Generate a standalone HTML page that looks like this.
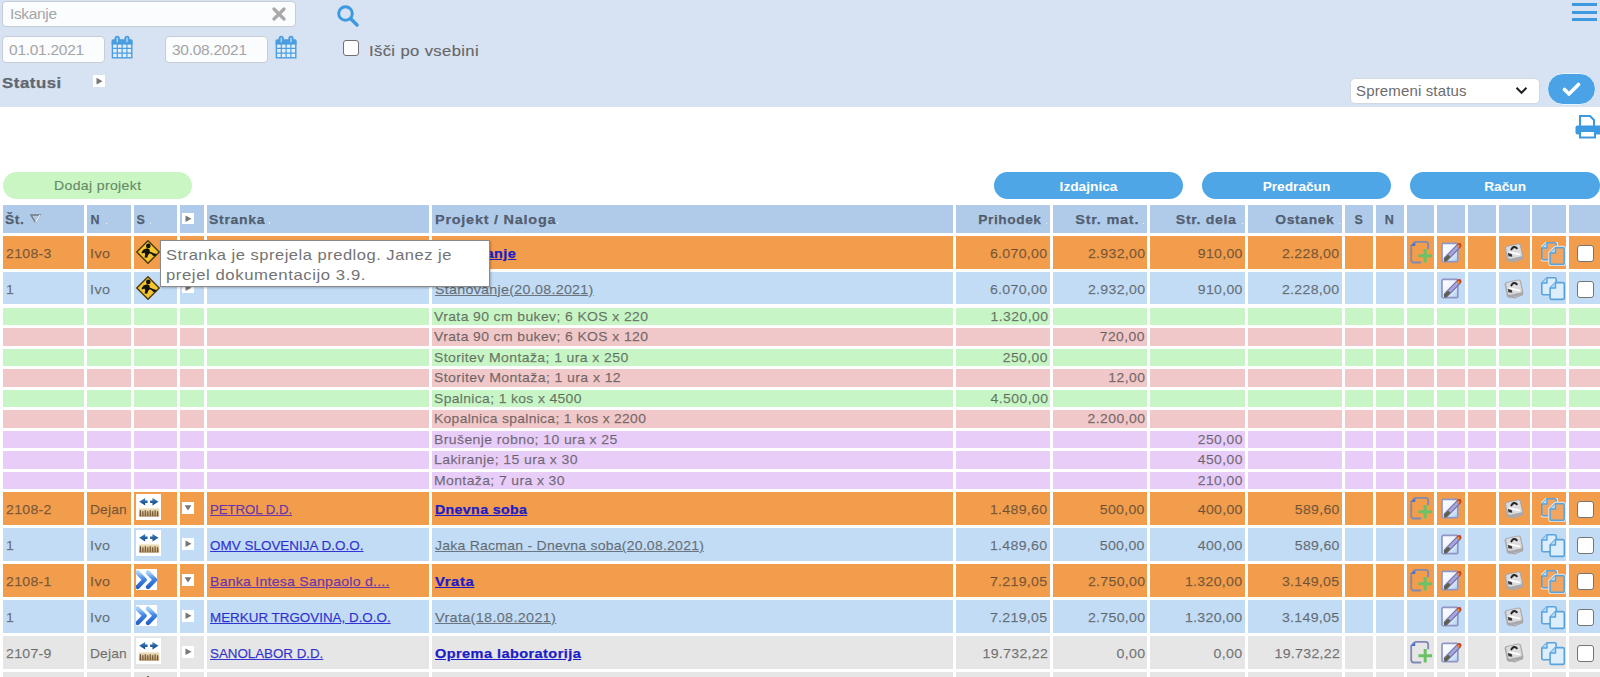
<!DOCTYPE html>
<html><head><meta charset="utf-8"><title>Projekti</title>
<style>
html,body{margin:0;padding:0;background:#fff;width:1600px;height:677px;overflow:hidden;position:relative;font-family:"Liberation Sans",sans-serif;}
.b{position:absolute;display:block;}
.t{position:absolute;white-space:nowrap;font-family:"Liberation Sans",sans-serif;}
.v{-webkit-text-stroke:0.25px currentColor;}
</style></head><body>
<div class="b" style="left:0.00px;top:0.00px;width:1600.00px;height:107.00px;background:#d7e3f2;"></div>
<div class="b" style="left:1.60px;top:0.60px;width:294.80px;height:26.30px;background:#fbfcfd;border:1px solid #c6cdd6;border-radius:4px;box-sizing:border-box;"></div>
<div class="t " style="top:6.08px;font-size:15.5px;line-height:15.5px;color:#a5a5a5;font-weight:normal;letter-spacing:-0.352px;left:10.00px;">Iskanje</div>
<svg class="b" style="left:272.00px;top:7.00px;" width="14" height="14" viewBox="0 0 14 14"><path d="M2 2 L12 12 M12 2 L2 12" stroke="#a9a9a9" stroke-width="3.2" stroke-linecap="round"/></svg>
<svg class="b" style="left:336.00px;top:4.00px;" width="24" height="23" viewBox="0 0 24 23"><circle cx="9.5" cy="9.5" r="6.8" fill="none" stroke="#3d9ae0" stroke-width="3"/><path d="M14.5 14.5 L21 21" stroke="#3d9ae0" stroke-width="3.4" stroke-linecap="round"/></svg>
<div class="b" style="left:1.60px;top:36.20px;width:103.80px;height:27.20px;background:#fbfcfd;border:1px solid #c6cdd6;border-radius:4px;box-sizing:border-box;"></div>
<div class="t " style="top:41.88px;font-size:15.5px;line-height:15.5px;color:#a5a5a5;font-weight:normal;letter-spacing:-0.286px;left:9.10px;">01.01.2021</div>
<div class="b" style="left:164.60px;top:36.20px;width:103.80px;height:27.20px;background:#fbfcfd;border:1px solid #c6cdd6;border-radius:4px;box-sizing:border-box;"></div>
<div class="t " style="top:41.88px;font-size:15.5px;line-height:15.5px;color:#a5a5a5;font-weight:normal;letter-spacing:-0.286px;left:172.00px;">30.08.2021</div>
<svg class="b" style="left:111.40px;top:34.60px;" width="22" height="24" viewBox="0 0 22 24"><rect x="1.4" y="8.6" width="19.4" height="14.2" fill="#e2eef9" stroke="#4a9de0" stroke-width="1.4"/><path d="M6.3 8.6 V22.8 M11.1 8.6 V22.8 M15.9 8.6 V22.8 M1.4 13.4 H20.8 M1.4 18.1 H20.8" stroke="#4a9de0" stroke-width="1.2"/><path d="M0.5 9.4 V5.8 Q0.5 4.2 2.1 4.2 H20.1 Q21.7 4.2 21.7 5.8 V9.4 Z" fill="#4a9de0"/><rect x="3.6" y="0.8" width="5.2" height="7" rx="2.6" fill="#4a9de0"/><rect x="13.4" y="0.8" width="5.2" height="7" rx="2.6" fill="#4a9de0"/><rect x="5.7" y="2.6" width="1" height="4.6" fill="#e2eef9"/><rect x="15.5" y="2.6" width="1" height="4.6" fill="#e2eef9"/></svg>
<svg class="b" style="left:274.60px;top:34.60px;" width="22" height="24" viewBox="0 0 22 24"><rect x="1.4" y="8.6" width="19.4" height="14.2" fill="#e2eef9" stroke="#4a9de0" stroke-width="1.4"/><path d="M6.3 8.6 V22.8 M11.1 8.6 V22.8 M15.9 8.6 V22.8 M1.4 13.4 H20.8 M1.4 18.1 H20.8" stroke="#4a9de0" stroke-width="1.2"/><path d="M0.5 9.4 V5.8 Q0.5 4.2 2.1 4.2 H20.1 Q21.7 4.2 21.7 5.8 V9.4 Z" fill="#4a9de0"/><rect x="3.6" y="0.8" width="5.2" height="7" rx="2.6" fill="#4a9de0"/><rect x="13.4" y="0.8" width="5.2" height="7" rx="2.6" fill="#4a9de0"/><rect x="5.7" y="2.6" width="1" height="4.6" fill="#e2eef9"/><rect x="15.5" y="2.6" width="1" height="4.6" fill="#e2eef9"/></svg>
<div class="b" style="left:342.50px;top:40.30px;width:16.20px;height:15.50px;background:#fff;border:1.5px solid #707070;border-radius:3px;box-sizing:border-box;"></div>
<div class="t " style="top:42.88px;font-size:15.5px;line-height:15.5px;color:#666;font-weight:normal;letter-spacing:0.341px;left:369.00px;transform:scaleX(1.0736);transform-origin:0 50%;-webkit-text-stroke:0.15px currentColor;">Išči po vsebini</div>
<div class="t v" style="top:74.68px;font-size:15.5px;line-height:15.5px;color:#5f6670;font-weight:bold;letter-spacing:0.488px;left:2.00px;transform:scaleX(1.0850);transform-origin:0 50%;">Statusi</div>
<div class="b" style="left:93.00px;top:75.00px;width:12.00px;height:12.40px;background:#fff;"></div>
<svg class="b" style="left:93.00px;top:75.00px;" width="12" height="12.4" viewBox="0 0 12 12.4"><path d="M3.5 2.8 L9.5 6.2 L3.5 9.6 Z" fill="#777"/></svg>
<div class="b" style="left:1572.00px;top:2.90px;width:24.70px;height:3.30px;background:#3d9ae0;"></div>
<div class="b" style="left:1572.00px;top:10.60px;width:24.70px;height:3.30px;background:#3d9ae0;"></div>
<div class="b" style="left:1572.00px;top:17.90px;width:24.70px;height:3.30px;background:#3d9ae0;"></div>
<div class="b" style="left:1349.75px;top:78.00px;width:189.75px;height:26.00px;background:#fff;border:1px solid #d2d8df;border-radius:5px;box-sizing:border-box;"></div>
<div class="t " style="top:82.80px;font-size:15px;line-height:15px;color:#6c6c6c;font-weight:normal;letter-spacing:0.15px;left:1356.00px;">Spremeni status</div>
<svg class="b" style="left:1515.00px;top:86.00px;" width="13" height="9" viewBox="0 0 13 9"><path d="M1.5 1.8 L6.5 6.8 L11.5 1.8" fill="none" stroke="#222" stroke-width="2"/></svg>
<div class="b" style="left:1547.00px;top:72.80px;width:49.00px;height:32.50px;background:#4aa3e6;border:1.5px solid #e8f3fc;border-radius:17px;box-sizing:border-box;"></div>
<svg class="b" style="left:1562.00px;top:82.00px;" width="19" height="15" viewBox="0 0 19 15"><path d="M2.5 7.5 L7 12 L16.5 2.5" fill="none" stroke="#fff" stroke-width="3.6" stroke-linecap="round" stroke-linejoin="round"/></svg>
<svg class="b" style="left:1574.00px;top:114.00px;" width="26" height="25" viewBox="0 0 26 25"><path d="M6 12 V2 H16 L20 6 V12" fill="#fff" stroke="#3d9ae0" stroke-width="2"/><rect x="1.5" y="11.5" width="26" height="9" rx="2" fill="#3d9ae0"/><rect x="6" y="17" width="15" height="6.5" fill="#fff" stroke="#3d9ae0" stroke-width="2"/></svg>
<div class="b" style="left:3.00px;top:172.00px;width:189.00px;height:27.40px;background:#c9f6c3;border-radius:14px;"></div>
<div class="t " style="top:179.36px;font-size:13.4px;line-height:13.4px;color:#688a67;font-weight:normal;letter-spacing:0.331px;left:53.90px;transform:scaleX(1.0503);transform-origin:0 50%;-webkit-text-stroke:0.15px currentColor;">Dodaj projekt</div>
<div class="b" style="left:994.00px;top:172.00px;width:189.00px;height:27.40px;background:#4ea6e6;border-radius:14px;"></div>
<div class="t" style="left:994px;width:189px;top:179.90px;font-size:13.7px;line-height:13.7px;color:#fff;font-weight:bold;text-align:center;">Izdajnica</div>
<div class="b" style="left:1202.00px;top:172.00px;width:189.00px;height:27.40px;background:#4ea6e6;border-radius:14px;"></div>
<div class="t" style="left:1202px;width:189px;top:179.90px;font-size:13.7px;line-height:13.7px;color:#fff;font-weight:bold;text-align:center;">Predračun</div>
<div class="b" style="left:1410.30px;top:172.00px;width:189.70px;height:27.40px;background:#4ea6e6;border-radius:14px;"></div>
<div class="t" style="left:1410.3px;width:189.70000000000005px;top:179.90px;font-size:13.7px;line-height:13.7px;color:#fff;font-weight:bold;text-align:center;">Račun</div>
<div class="b" style="left:3.00px;top:205.30px;width:81.00px;height:27.40px;background:#b0cbea;"></div>
<div class="b" style="left:87.00px;top:205.30px;width:43.50px;height:27.40px;background:#b0cbea;"></div>
<div class="b" style="left:133.50px;top:205.30px;width:43.20px;height:27.40px;background:#b0cbea;"></div>
<div class="b" style="left:179.70px;top:205.30px;width:24.00px;height:27.40px;background:#b0cbea;"></div>
<div class="b" style="left:206.60px;top:205.30px;width:222.60px;height:27.40px;background:#b0cbea;"></div>
<div class="b" style="left:432.00px;top:205.30px;width:520.50px;height:27.40px;background:#b0cbea;"></div>
<div class="b" style="left:955.50px;top:205.30px;width:94.50px;height:27.40px;background:#b0cbea;"></div>
<div class="b" style="left:1053.00px;top:205.30px;width:94.20px;height:27.40px;background:#b0cbea;"></div>
<div class="b" style="left:1150.00px;top:205.30px;width:94.50px;height:27.40px;background:#b0cbea;"></div>
<div class="b" style="left:1247.50px;top:205.30px;width:94.50px;height:27.40px;background:#b0cbea;"></div>
<div class="b" style="left:1345.00px;top:205.30px;width:28.00px;height:27.40px;background:#b0cbea;"></div>
<div class="b" style="left:1376.00px;top:205.30px;width:27.50px;height:27.40px;background:#b0cbea;"></div>
<div class="b" style="left:1406.50px;top:205.30px;width:27.80px;height:27.40px;background:#b0cbea;"></div>
<div class="b" style="left:1437.30px;top:205.30px;width:27.70px;height:27.40px;background:#b0cbea;"></div>
<div class="b" style="left:1468.00px;top:205.30px;width:28.00px;height:27.40px;background:#b0cbea;"></div>
<div class="b" style="left:1499.00px;top:205.30px;width:30.50px;height:27.40px;background:#b0cbea;"></div>
<div class="b" style="left:1532.20px;top:205.30px;width:34.30px;height:27.40px;background:#b0cbea;"></div>
<div class="b" style="left:1569.30px;top:205.30px;width:70.70px;height:27.40px;background:#b0cbea;"></div>
<div class="t v" style="top:214.42px;font-size:12.5px;line-height:12.5px;color:rgba(40,45,55,0.68);font-weight:bold;letter-spacing:0.565px;left:5.20px;transform:scaleX(1.1062);transform-origin:0 50%;">Št.</div>
<svg class="b" style="left:30.00px;top:214.00px;" width="11" height="9" viewBox="0 0 11 9"><path d="M1 1 H10 L5.5 8.5 Z" fill="none" stroke="#6f7a86" stroke-width="1.4"/><path d="M10 1 L5.5 8.5" stroke="#fff" stroke-width="1.2"/></svg>
<div class="t v" style="top:214.42px;font-size:12.5px;line-height:12.5px;color:rgba(40,45,55,0.68);font-weight:bold;letter-spacing:0px;left:90.50px;">N</div>
<div class="t v" style="top:214.42px;font-size:12.5px;line-height:12.5px;color:rgba(40,45,55,0.68);font-weight:bold;letter-spacing:0px;left:136.50px;">S</div>
<div class="b" style="left:182.00px;top:212.50px;width:12.00px;height:11.50px;background:#fff;"></div>
<svg class="b" style="left:182.00px;top:212.50px;" width="12" height="11.5" viewBox="0 0 12 11.5"><path d="M3.5 2.5 L9.5 5.8 L3.5 9.1 Z" fill="#777"/></svg>
<div class="t v" style="top:214.42px;font-size:12.5px;line-height:12.5px;color:rgba(40,45,55,0.68);font-weight:bold;letter-spacing:0.623px;left:209.30px;transform:scaleX(1.1222);transform-origin:0 50%;">Stranka</div>
<div class="t v" style="top:214.42px;font-size:12.5px;line-height:12.5px;color:rgba(40,45,55,0.68);font-weight:bold;letter-spacing:0.654px;left:435.00px;transform:scaleX(1.1558);transform-origin:0 50%;">Projekt / Naloga</div>
<div class="t v" style="top:214.42px;font-size:12.5px;line-height:12.5px;color:rgba(40,45,55,0.68);font-weight:bold;letter-spacing:0.509px;right:558.59px;text-align:right;transform:scaleX(1.1000);transform-origin:100% 50%;">Prihodek</div>
<div class="t v" style="top:214.42px;font-size:12.5px;line-height:12.5px;color:rgba(40,45,55,0.68);font-weight:bold;letter-spacing:0.649px;right:460.85px;text-align:right;transform:scaleX(1.1579);transform-origin:100% 50%;">Str. mat.</div>
<div class="t v" style="top:214.42px;font-size:12.5px;line-height:12.5px;color:rgba(40,45,55,0.68);font-weight:bold;letter-spacing:0.543px;right:363.96px;text-align:right;transform:scaleX(1.1341);transform-origin:100% 50%;">Str. dela</div>
<div class="t v" style="top:214.42px;font-size:12.5px;line-height:12.5px;color:rgba(40,45,55,0.68);font-weight:bold;letter-spacing:0.585px;right:265.92px;text-align:right;transform:scaleX(1.1067);transform-origin:100% 50%;">Ostanek</div>
<div class="t v" style="top:214.42px;font-size:12.5px;line-height:12.5px;color:rgba(40,45,55,0.68);font-weight:bold;letter-spacing:0px;left:1354.50px;">S</div>
<div class="t v" style="top:214.42px;font-size:12.5px;line-height:12.5px;color:rgba(40,45,55,0.68);font-weight:bold;letter-spacing:0px;left:1384.70px;">N</div>
<div class="b" style="left:105.50px;top:222.60px;width:1.30px;height:1.30px;background:rgba(255,255,255,0.8);"></div>
<div class="b" style="left:149.50px;top:222.60px;width:1.30px;height:1.30px;background:rgba(255,255,255,0.8);"></div>
<div class="b" style="left:269.00px;top:222.30px;width:1.30px;height:1.30px;background:rgba(255,255,255,0.8);"></div>
<div class="b" style="left:557.00px;top:222.30px;width:1.30px;height:1.30px;background:rgba(255,255,255,0.8);"></div>
<div class="b" style="left:1045.50px;top:222.60px;width:1.30px;height:1.30px;background:rgba(255,255,255,0.8);"></div>
<div class="b" style="left:1143.20px;top:222.60px;width:1.30px;height:1.30px;background:rgba(255,255,255,0.8);"></div>
<div class="b" style="left:1241.50px;top:222.60px;width:1.30px;height:1.30px;background:rgba(255,255,255,0.8);"></div>
<div class="b" style="left:1338.70px;top:222.60px;width:1.30px;height:1.30px;background:rgba(255,255,255,0.8);"></div>
<div class="b" style="left:3.00px;top:236.00px;width:81.00px;height:32.60px;background:#f29d4c;"></div>
<div class="b" style="left:87.00px;top:236.00px;width:43.50px;height:32.60px;background:#f29d4c;"></div>
<div class="b" style="left:133.50px;top:236.00px;width:43.20px;height:32.60px;background:#f29d4c;"></div>
<div class="b" style="left:179.70px;top:236.00px;width:24.00px;height:32.60px;background:#f29d4c;"></div>
<div class="b" style="left:206.60px;top:236.00px;width:222.60px;height:32.60px;background:#f29d4c;"></div>
<div class="b" style="left:432.00px;top:236.00px;width:520.50px;height:32.60px;background:#f29d4c;"></div>
<div class="b" style="left:955.50px;top:236.00px;width:94.50px;height:32.60px;background:#f29d4c;"></div>
<div class="b" style="left:1053.00px;top:236.00px;width:94.20px;height:32.60px;background:#f29d4c;"></div>
<div class="b" style="left:1150.00px;top:236.00px;width:94.50px;height:32.60px;background:#f29d4c;"></div>
<div class="b" style="left:1247.50px;top:236.00px;width:94.50px;height:32.60px;background:#f29d4c;"></div>
<div class="b" style="left:1345.00px;top:236.00px;width:28.00px;height:32.60px;background:#f29d4c;"></div>
<div class="b" style="left:1376.00px;top:236.00px;width:27.50px;height:32.60px;background:#f29d4c;"></div>
<div class="b" style="left:1406.50px;top:236.00px;width:27.80px;height:32.60px;background:#f29d4c;"></div>
<div class="b" style="left:1437.30px;top:236.00px;width:27.70px;height:32.60px;background:#f29d4c;"></div>
<div class="b" style="left:1468.00px;top:236.00px;width:28.00px;height:32.60px;background:#f29d4c;"></div>
<div class="b" style="left:1499.00px;top:236.00px;width:30.50px;height:32.60px;background:#f29d4c;"></div>
<div class="b" style="left:1532.20px;top:236.00px;width:34.30px;height:32.60px;background:#f29d4c;"></div>
<div class="b" style="left:1569.30px;top:236.00px;width:70.70px;height:32.60px;background:#f29d4c;"></div>
<div class="t v" style="top:246.66px;font-size:13.4px;line-height:13.4px;color:rgba(45,45,45,0.58);font-weight:normal;letter-spacing:0.293px;left:5.90px;transform:scaleX(1.0527);transform-origin:0 50%;">2108-3</div>
<div class="t v" style="top:246.66px;font-size:13.4px;line-height:13.4px;color:rgba(45,45,45,0.58);font-weight:normal;letter-spacing:0.405px;left:90.10px;transform:scaleX(1.0680);transform-origin:0 50%;">Ivo</div>
<svg class="b" style="left:136.00px;top:239.70px;" width="24" height="24" viewBox="0 0 24 24"><path d="M12 0.8 L23.2 12 L12 23.2 L0.8 12 Z" fill="#f5c72c" stroke="#4d3b12" stroke-width="1.5" stroke-linejoin="round"/><circle cx="12.3" cy="5.9" r="2.3" fill="#111"/><path d="M11.2 8.2 L7.6 9.4 L5.4 12.2 L6.4 13.6 L8.4 12.6 L9.2 14.4 L8.6 17.4 L11.2 17.8 L12 15.2 L13.8 12.8 L13.6 9.6 Z" fill="#111"/><path d="M10.6 11.6 L15.2 13 L18.2 14.6" fill="none" stroke="#111" stroke-width="1.8" stroke-linecap="round"/><ellipse cx="18.4" cy="14.8" rx="2" ry="1.4" fill="#1a1a1a"/></svg>
<div class="b" style="left:181.70px;top:246.00px;width:12.00px;height:11.50px;background:#fff;"></div>
<svg class="b" style="left:181.70px;top:246.00px;" width="12" height="11.5" viewBox="0 0 12 11.5"><path d="M2.6 3.3 L9.4 3.3 L6 8.6 Z" fill="#777"/></svg>
<div class="t v" style="top:246.66px;font-size:13.4px;line-height:13.4px;color:#1c1cc8;font-weight:bold;letter-spacing:0.405px;left:435.00px;transform:scaleX(1.0764);transform-origin:0 50%;text-decoration:underline;">Stanovanje</div>
<div class="t v" style="top:246.66px;font-size:13.4px;line-height:13.4px;color:rgba(45,45,45,0.58);font-weight:normal;letter-spacing:0.283px;right:552.32px;text-align:right;transform:scaleX(1.0570);transform-origin:100% 50%;">6.070,00</div>
<div class="t v" style="top:246.66px;font-size:13.4px;line-height:13.4px;color:rgba(45,45,45,0.58);font-weight:normal;letter-spacing:0.283px;right:455.12px;text-align:right;transform:scaleX(1.0570);transform-origin:100% 50%;">2.932,00</div>
<div class="t v" style="top:246.66px;font-size:13.4px;line-height:13.4px;color:rgba(45,45,45,0.58);font-weight:normal;letter-spacing:0.285px;right:357.81px;text-align:right;transform:scaleX(1.0521);transform-origin:100% 50%;">910,00</div>
<div class="t v" style="top:246.66px;font-size:13.4px;line-height:13.4px;color:rgba(45,45,45,0.58);font-weight:normal;letter-spacing:0.283px;right:260.32px;text-align:right;transform:scaleX(1.0570);transform-origin:100% 50%;">2.228,00</div>
<svg class="b" style="left:1408.50px;top:240.50px;" width="24" height="24" viewBox="0 0 24 24"><path d="M6 0.9 H16.6 Q19.2 0.9 19.2 3.5 V8.2" fill="none" stroke="#8088b4" stroke-width="1.8"/><path d="M6 0.9 L2.2 4.9 V18.8 Q2.2 21.5 4.8 21.5 H12.2" fill="none" stroke="#8088b4" stroke-width="1.8"/><path d="M6.2 0.9 L2.2 5 H6.2 Z" fill="#3f6fd0"/><path d="M16.2 7.9 V21.6 M9.4 14.7 H23.1" stroke="#6cc066" stroke-width="3"/></svg>
<svg class="b" style="left:1439.80px;top:241.00px;" width="22" height="22" viewBox="0 0 22 22"><defs><linearGradient id="eg" x1="0" y1="0" x2="1" y2="1"><stop offset="0" stop-color="#ffffff"/><stop offset="0.55" stop-color="#eef2ff"/><stop offset="1" stop-color="#a9cdf2"/></linearGradient></defs><rect x="2" y="2.4" width="15.8" height="18.2" rx="1.2" fill="url(#eg)" stroke="#8f96c6" stroke-width="1.7"/><path d="M6.2 17.8 L18.2 5.4" stroke="#6f70a8" stroke-width="5" stroke-linecap="round"/><path d="M6.2 17.8 L18.2 5.4" stroke="#a9a6dc" stroke-width="2.8" stroke-linecap="round"/><path d="M5.4 18.8 L8.4 15.6" stroke="#5a6040" stroke-width="3" stroke-linecap="round"/><circle cx="19.2" cy="4.4" r="2.3" fill="#c8461e"/><circle cx="18.4" cy="5.2" r="1.1" fill="#f0a040"/></svg>
<svg class="b" style="left:1503.00px;top:240.80px;" width="23" height="23" viewBox="0 0 23 23"><g transform="rotate(-12 11 11.5)"><rect x="2.6" y="3.6" width="16.8" height="16" rx="2.6" fill="#a9a9ac"/><rect x="4.2" y="4.6" width="14" height="12.2" rx="1.6" fill="#dcdcde"/></g><path d="M8.4 8.4 Q10.4 4.4 13.8 7.2" fill="none" stroke="#262626" stroke-width="2.1" stroke-linecap="round"/><path d="M5 12 L8.6 12.8 L9.4 15.8 L5.4 15.2 Z" fill="#363636"/><path d="M6.2 11.2 L17 13.6" stroke="#ffffff" stroke-width="1.8"/><path d="M3.6 18.6 L11.6 20.8 L20 17.6" fill="none" stroke="#a8a8aa" stroke-width="1.1"/></svg>
<svg class="b" style="left:1540.50px;top:241.50px;" width="25" height="24" viewBox="0 0 25 24"><path d="M6 0.8 H13.7 Q15.2 0.8 15.2 2.3 V16.2 Q15.2 17.7 13.7 17.7 H2.3 Q0.8 17.7 0.8 16.2 V6 Z" fill="none" stroke="#fbe8d8" stroke-width="3.6" stroke-linejoin="round"/><path d="M6 0.8 H13.7 Q15.2 0.8 15.2 2.3 V16.2 Q15.2 17.7 13.7 17.7 H2.3 Q0.8 17.7 0.8 16.2 V6 Z" fill="#f2a462" stroke="#5aa2dc" stroke-width="1.6" stroke-linejoin="round"/><path d="M6 0.8 V6 H0.8" fill="#b4defa" stroke="#5aa2dc" stroke-width="1.4" stroke-linejoin="round"/><path d="M14.5 5.6 H21.8 Q23.3 5.6 23.3 7.1 V20.9 Q23.3 22.4 21.8 22.4 H10.6 Q9.1 22.4 9.1 20.9 V11 Z" fill="none" stroke="#fbe8d8" stroke-width="3.6" stroke-linejoin="round"/><path d="M14.5 5.6 H21.8 Q23.3 5.6 23.3 7.1 V20.9 Q23.3 22.4 21.8 22.4 H10.6 Q9.1 22.4 9.1 20.9 V11 Z" fill="#f2a462" stroke="#5aa2dc" stroke-width="1.6" stroke-linejoin="round"/><path d="M14.5 5.6 V11 H9.1" fill="#b4defa" stroke="#5aa2dc" stroke-width="1.4" stroke-linejoin="round"/></svg>
<div class="b" style="left:1577.00px;top:244.70px;width:16.80px;height:17.00px;background:#fff;border:1.6px solid #747474;border-radius:3px;box-sizing:border-box;"></div>
<div class="b" style="left:3.00px;top:271.90px;width:81.00px;height:32.60px;background:#c3dcf5;"></div>
<div class="b" style="left:87.00px;top:271.90px;width:43.50px;height:32.60px;background:#c3dcf5;"></div>
<div class="b" style="left:133.50px;top:271.90px;width:43.20px;height:32.60px;background:#c3dcf5;"></div>
<div class="b" style="left:179.70px;top:271.90px;width:24.00px;height:32.60px;background:#c3dcf5;"></div>
<div class="b" style="left:206.60px;top:271.90px;width:222.60px;height:32.60px;background:#c3dcf5;"></div>
<div class="b" style="left:432.00px;top:271.90px;width:520.50px;height:32.60px;background:#c3dcf5;"></div>
<div class="b" style="left:955.50px;top:271.90px;width:94.50px;height:32.60px;background:#c3dcf5;"></div>
<div class="b" style="left:1053.00px;top:271.90px;width:94.20px;height:32.60px;background:#c3dcf5;"></div>
<div class="b" style="left:1150.00px;top:271.90px;width:94.50px;height:32.60px;background:#c3dcf5;"></div>
<div class="b" style="left:1247.50px;top:271.90px;width:94.50px;height:32.60px;background:#c3dcf5;"></div>
<div class="b" style="left:1345.00px;top:271.90px;width:28.00px;height:32.60px;background:#c3dcf5;"></div>
<div class="b" style="left:1376.00px;top:271.90px;width:27.50px;height:32.60px;background:#c3dcf5;"></div>
<div class="b" style="left:1406.50px;top:271.90px;width:27.80px;height:32.60px;background:#c3dcf5;"></div>
<div class="b" style="left:1437.30px;top:271.90px;width:27.70px;height:32.60px;background:#c3dcf5;"></div>
<div class="b" style="left:1468.00px;top:271.90px;width:28.00px;height:32.60px;background:#c3dcf5;"></div>
<div class="b" style="left:1499.00px;top:271.90px;width:30.50px;height:32.60px;background:#c3dcf5;"></div>
<div class="b" style="left:1532.20px;top:271.90px;width:34.30px;height:32.60px;background:#c3dcf5;"></div>
<div class="b" style="left:1569.30px;top:271.90px;width:70.70px;height:32.60px;background:#c3dcf5;"></div>
<div class="t v" style="top:282.56px;font-size:13.4px;line-height:13.4px;color:rgba(45,45,45,0.58);font-weight:normal;letter-spacing:0.217px;left:5.90px;transform:scaleX(1.0436);transform-origin:0 50%;">1</div>
<div class="t v" style="top:282.56px;font-size:13.4px;line-height:13.4px;color:rgba(45,45,45,0.58);font-weight:normal;letter-spacing:0.405px;left:90.10px;transform:scaleX(1.0680);transform-origin:0 50%;">Ivo</div>
<svg class="b" style="left:136.00px;top:275.60px;" width="24" height="24" viewBox="0 0 24 24"><path d="M12 0.8 L23.2 12 L12 23.2 L0.8 12 Z" fill="#f5c72c" stroke="#4d3b12" stroke-width="1.5" stroke-linejoin="round"/><circle cx="12.3" cy="5.9" r="2.3" fill="#111"/><path d="M11.2 8.2 L7.6 9.4 L5.4 12.2 L6.4 13.6 L8.4 12.6 L9.2 14.4 L8.6 17.4 L11.2 17.8 L12 15.2 L13.8 12.8 L13.6 9.6 Z" fill="#111"/><path d="M10.6 11.6 L15.2 13 L18.2 14.6" fill="none" stroke="#111" stroke-width="1.8" stroke-linecap="round"/><ellipse cx="18.4" cy="14.8" rx="2" ry="1.4" fill="#1a1a1a"/></svg>
<div class="b" style="left:181.70px;top:281.90px;width:12.00px;height:11.50px;background:#fff;"></div>
<svg class="b" style="left:181.70px;top:281.90px;" width="12" height="11.5" viewBox="0 0 12 11.5"><path d="M3.5 2.5 L9.5 5.8 L3.5 9.1 Z" fill="#777"/></svg>
<div class="t v" style="top:282.56px;font-size:13.4px;line-height:13.4px;color:rgba(45,45,45,0.58);font-weight:normal;letter-spacing:0.285px;left:435.00px;transform:scaleX(1.0627);transform-origin:0 50%;text-decoration:underline;">Stanovanje(20.08.2021)</div>
<div class="t v" style="top:282.56px;font-size:13.4px;line-height:13.4px;color:rgba(45,45,45,0.58);font-weight:normal;letter-spacing:0.283px;right:552.32px;text-align:right;transform:scaleX(1.0570);transform-origin:100% 50%;">6.070,00</div>
<div class="t v" style="top:282.56px;font-size:13.4px;line-height:13.4px;color:rgba(45,45,45,0.58);font-weight:normal;letter-spacing:0.283px;right:455.12px;text-align:right;transform:scaleX(1.0570);transform-origin:100% 50%;">2.932,00</div>
<div class="t v" style="top:282.56px;font-size:13.4px;line-height:13.4px;color:rgba(45,45,45,0.58);font-weight:normal;letter-spacing:0.285px;right:357.81px;text-align:right;transform:scaleX(1.0521);transform-origin:100% 50%;">910,00</div>
<div class="t v" style="top:282.56px;font-size:13.4px;line-height:13.4px;color:rgba(45,45,45,0.58);font-weight:normal;letter-spacing:0.283px;right:260.32px;text-align:right;transform:scaleX(1.0570);transform-origin:100% 50%;">2.228,00</div>
<svg class="b" style="left:1439.80px;top:276.90px;" width="22" height="22" viewBox="0 0 22 22"><defs><linearGradient id="eg" x1="0" y1="0" x2="1" y2="1"><stop offset="0" stop-color="#ffffff"/><stop offset="0.55" stop-color="#eef2ff"/><stop offset="1" stop-color="#a9cdf2"/></linearGradient></defs><rect x="2" y="2.4" width="15.8" height="18.2" rx="1.2" fill="url(#eg)" stroke="#8f96c6" stroke-width="1.7"/><path d="M6.2 17.8 L18.2 5.4" stroke="#6f70a8" stroke-width="5" stroke-linecap="round"/><path d="M6.2 17.8 L18.2 5.4" stroke="#a9a6dc" stroke-width="2.8" stroke-linecap="round"/><path d="M5.4 18.8 L8.4 15.6" stroke="#5a6040" stroke-width="3" stroke-linecap="round"/><circle cx="19.2" cy="4.4" r="2.3" fill="#c8461e"/><circle cx="18.4" cy="5.2" r="1.1" fill="#f0a040"/></svg>
<svg class="b" style="left:1503.00px;top:276.70px;" width="23" height="23" viewBox="0 0 23 23"><g transform="rotate(-12 11 11.5)"><rect x="2.6" y="3.6" width="16.8" height="16" rx="2.6" fill="#a9a9ac"/><rect x="4.2" y="4.6" width="14" height="12.2" rx="1.6" fill="#dcdcde"/></g><path d="M8.4 8.4 Q10.4 4.4 13.8 7.2" fill="none" stroke="#262626" stroke-width="2.1" stroke-linecap="round"/><path d="M5 12 L8.6 12.8 L9.4 15.8 L5.4 15.2 Z" fill="#363636"/><path d="M6.2 11.2 L17 13.6" stroke="#ffffff" stroke-width="1.8"/><path d="M3.6 18.6 L11.6 20.8 L20 17.6" fill="none" stroke="#a8a8aa" stroke-width="1.1"/></svg>
<svg class="b" style="left:1540.50px;top:277.40px;" width="25" height="24" viewBox="0 0 25 24"><path d="M6 0.8 H13.7 Q15.2 0.8 15.2 2.3 V16.2 Q15.2 17.7 13.7 17.7 H2.3 Q0.8 17.7 0.8 16.2 V6 Z" fill="#dcedfb" stroke="#5aa2dc" stroke-width="1.6" stroke-linejoin="round"/><path d="M6 0.8 V6 H0.8" fill="#b4defa" stroke="#5aa2dc" stroke-width="1.4" stroke-linejoin="round"/><path d="M14.5 5.6 H21.8 Q23.3 5.6 23.3 7.1 V20.9 Q23.3 22.4 21.8 22.4 H10.6 Q9.1 22.4 9.1 20.9 V11 Z" fill="#dcedfb" stroke="#5aa2dc" stroke-width="1.6" stroke-linejoin="round"/><path d="M14.5 5.6 V11 H9.1" fill="#b4defa" stroke="#5aa2dc" stroke-width="1.4" stroke-linejoin="round"/></svg>
<div class="b" style="left:1577.00px;top:280.60px;width:16.80px;height:17.00px;background:#fff;border:1.6px solid #747474;border-radius:3px;box-sizing:border-box;"></div>
<div class="b" style="left:3.00px;top:307.60px;width:81.00px;height:17.60px;background:#c7f5c5;"></div>
<div class="b" style="left:87.00px;top:307.60px;width:43.50px;height:17.60px;background:#c7f5c5;"></div>
<div class="b" style="left:133.50px;top:307.60px;width:43.20px;height:17.60px;background:#c7f5c5;"></div>
<div class="b" style="left:179.70px;top:307.60px;width:24.00px;height:17.60px;background:#c7f5c5;"></div>
<div class="b" style="left:206.60px;top:307.60px;width:222.60px;height:17.60px;background:#c7f5c5;"></div>
<div class="b" style="left:432.00px;top:307.60px;width:520.50px;height:17.60px;background:#c7f5c5;"></div>
<div class="b" style="left:955.50px;top:307.60px;width:94.50px;height:17.60px;background:#c7f5c5;"></div>
<div class="b" style="left:1053.00px;top:307.60px;width:94.20px;height:17.60px;background:#c7f5c5;"></div>
<div class="b" style="left:1150.00px;top:307.60px;width:94.50px;height:17.60px;background:#c7f5c5;"></div>
<div class="b" style="left:1247.50px;top:307.60px;width:94.50px;height:17.60px;background:#c7f5c5;"></div>
<div class="b" style="left:1345.00px;top:307.60px;width:28.00px;height:17.60px;background:#c7f5c5;"></div>
<div class="b" style="left:1376.00px;top:307.60px;width:27.50px;height:17.60px;background:#c7f5c5;"></div>
<div class="b" style="left:1406.50px;top:307.60px;width:27.80px;height:17.60px;background:#c7f5c5;"></div>
<div class="b" style="left:1437.30px;top:307.60px;width:27.70px;height:17.60px;background:#c7f5c5;"></div>
<div class="b" style="left:1468.00px;top:307.60px;width:28.00px;height:17.60px;background:#c7f5c5;"></div>
<div class="b" style="left:1499.00px;top:307.60px;width:30.50px;height:17.60px;background:#c7f5c5;"></div>
<div class="b" style="left:1532.20px;top:307.60px;width:34.30px;height:17.60px;background:#c7f5c5;"></div>
<div class="b" style="left:1569.30px;top:307.60px;width:70.70px;height:17.60px;background:#c7f5c5;"></div>
<div class="t v" style="top:310.98px;font-size:12.9px;line-height:12.9px;color:rgba(45,45,45,0.58);font-weight:normal;letter-spacing:0.357px;left:433.75px;transform:scaleX(1.0830);transform-origin:0 50%;">Vrata 90 cm bukev; 6 KOS x 220</div>
<div class="t v" style="top:310.98px;font-size:12.9px;line-height:12.9px;color:rgba(45,45,45,0.58);font-weight:normal;letter-spacing:0.394px;right:551.91px;text-align:right;transform:scaleX(1.0825);transform-origin:100% 50%;">1.320,00</div>
<div class="b" style="left:3.00px;top:328.10px;width:81.00px;height:17.60px;background:#f0c8c9;"></div>
<div class="b" style="left:87.00px;top:328.10px;width:43.50px;height:17.60px;background:#f0c8c9;"></div>
<div class="b" style="left:133.50px;top:328.10px;width:43.20px;height:17.60px;background:#f0c8c9;"></div>
<div class="b" style="left:179.70px;top:328.10px;width:24.00px;height:17.60px;background:#f0c8c9;"></div>
<div class="b" style="left:206.60px;top:328.10px;width:222.60px;height:17.60px;background:#f0c8c9;"></div>
<div class="b" style="left:432.00px;top:328.10px;width:520.50px;height:17.60px;background:#f0c8c9;"></div>
<div class="b" style="left:955.50px;top:328.10px;width:94.50px;height:17.60px;background:#f0c8c9;"></div>
<div class="b" style="left:1053.00px;top:328.10px;width:94.20px;height:17.60px;background:#f0c8c9;"></div>
<div class="b" style="left:1150.00px;top:328.10px;width:94.50px;height:17.60px;background:#f0c8c9;"></div>
<div class="b" style="left:1247.50px;top:328.10px;width:94.50px;height:17.60px;background:#f0c8c9;"></div>
<div class="b" style="left:1345.00px;top:328.10px;width:28.00px;height:17.60px;background:#f0c8c9;"></div>
<div class="b" style="left:1376.00px;top:328.10px;width:27.50px;height:17.60px;background:#f0c8c9;"></div>
<div class="b" style="left:1406.50px;top:328.10px;width:27.80px;height:17.60px;background:#f0c8c9;"></div>
<div class="b" style="left:1437.30px;top:328.10px;width:27.70px;height:17.60px;background:#f0c8c9;"></div>
<div class="b" style="left:1468.00px;top:328.10px;width:28.00px;height:17.60px;background:#f0c8c9;"></div>
<div class="b" style="left:1499.00px;top:328.10px;width:30.50px;height:17.60px;background:#f0c8c9;"></div>
<div class="b" style="left:1532.20px;top:328.10px;width:34.30px;height:17.60px;background:#f0c8c9;"></div>
<div class="b" style="left:1569.30px;top:328.10px;width:70.70px;height:17.60px;background:#f0c8c9;"></div>
<div class="t v" style="top:331.48px;font-size:12.9px;line-height:12.9px;color:rgba(45,45,45,0.58);font-weight:normal;letter-spacing:0.357px;left:433.75px;transform:scaleX(1.0830);transform-origin:0 50%;">Vrata 90 cm bukev; 6 KOS x 120</div>
<div class="t v" style="top:331.48px;font-size:12.9px;line-height:12.9px;color:rgba(45,45,45,0.58);font-weight:normal;letter-spacing:0.407px;right:454.69px;text-align:right;transform:scaleX(1.0774);transform-origin:100% 50%;">720,00</div>
<div class="b" style="left:3.00px;top:348.60px;width:81.00px;height:17.60px;background:#c7f5c5;"></div>
<div class="b" style="left:87.00px;top:348.60px;width:43.50px;height:17.60px;background:#c7f5c5;"></div>
<div class="b" style="left:133.50px;top:348.60px;width:43.20px;height:17.60px;background:#c7f5c5;"></div>
<div class="b" style="left:179.70px;top:348.60px;width:24.00px;height:17.60px;background:#c7f5c5;"></div>
<div class="b" style="left:206.60px;top:348.60px;width:222.60px;height:17.60px;background:#c7f5c5;"></div>
<div class="b" style="left:432.00px;top:348.60px;width:520.50px;height:17.60px;background:#c7f5c5;"></div>
<div class="b" style="left:955.50px;top:348.60px;width:94.50px;height:17.60px;background:#c7f5c5;"></div>
<div class="b" style="left:1053.00px;top:348.60px;width:94.20px;height:17.60px;background:#c7f5c5;"></div>
<div class="b" style="left:1150.00px;top:348.60px;width:94.50px;height:17.60px;background:#c7f5c5;"></div>
<div class="b" style="left:1247.50px;top:348.60px;width:94.50px;height:17.60px;background:#c7f5c5;"></div>
<div class="b" style="left:1345.00px;top:348.60px;width:28.00px;height:17.60px;background:#c7f5c5;"></div>
<div class="b" style="left:1376.00px;top:348.60px;width:27.50px;height:17.60px;background:#c7f5c5;"></div>
<div class="b" style="left:1406.50px;top:348.60px;width:27.80px;height:17.60px;background:#c7f5c5;"></div>
<div class="b" style="left:1437.30px;top:348.60px;width:27.70px;height:17.60px;background:#c7f5c5;"></div>
<div class="b" style="left:1468.00px;top:348.60px;width:28.00px;height:17.60px;background:#c7f5c5;"></div>
<div class="b" style="left:1499.00px;top:348.60px;width:30.50px;height:17.60px;background:#c7f5c5;"></div>
<div class="b" style="left:1532.20px;top:348.60px;width:34.30px;height:17.60px;background:#c7f5c5;"></div>
<div class="b" style="left:1569.30px;top:348.60px;width:70.70px;height:17.60px;background:#c7f5c5;"></div>
<div class="t v" style="top:351.98px;font-size:12.9px;line-height:12.9px;color:rgba(45,45,45,0.58);font-weight:normal;letter-spacing:0.357px;left:433.75px;transform:scaleX(1.0890);transform-origin:0 50%;">Storitev Montaža; 1 ura x 250</div>
<div class="t v" style="top:351.98px;font-size:12.9px;line-height:12.9px;color:rgba(45,45,45,0.58);font-weight:normal;letter-spacing:0.407px;right:551.89px;text-align:right;transform:scaleX(1.0774);transform-origin:100% 50%;">250,00</div>
<div class="b" style="left:3.00px;top:369.10px;width:81.00px;height:17.60px;background:#f0c8c9;"></div>
<div class="b" style="left:87.00px;top:369.10px;width:43.50px;height:17.60px;background:#f0c8c9;"></div>
<div class="b" style="left:133.50px;top:369.10px;width:43.20px;height:17.60px;background:#f0c8c9;"></div>
<div class="b" style="left:179.70px;top:369.10px;width:24.00px;height:17.60px;background:#f0c8c9;"></div>
<div class="b" style="left:206.60px;top:369.10px;width:222.60px;height:17.60px;background:#f0c8c9;"></div>
<div class="b" style="left:432.00px;top:369.10px;width:520.50px;height:17.60px;background:#f0c8c9;"></div>
<div class="b" style="left:955.50px;top:369.10px;width:94.50px;height:17.60px;background:#f0c8c9;"></div>
<div class="b" style="left:1053.00px;top:369.10px;width:94.20px;height:17.60px;background:#f0c8c9;"></div>
<div class="b" style="left:1150.00px;top:369.10px;width:94.50px;height:17.60px;background:#f0c8c9;"></div>
<div class="b" style="left:1247.50px;top:369.10px;width:94.50px;height:17.60px;background:#f0c8c9;"></div>
<div class="b" style="left:1345.00px;top:369.10px;width:28.00px;height:17.60px;background:#f0c8c9;"></div>
<div class="b" style="left:1376.00px;top:369.10px;width:27.50px;height:17.60px;background:#f0c8c9;"></div>
<div class="b" style="left:1406.50px;top:369.10px;width:27.80px;height:17.60px;background:#f0c8c9;"></div>
<div class="b" style="left:1437.30px;top:369.10px;width:27.70px;height:17.60px;background:#f0c8c9;"></div>
<div class="b" style="left:1468.00px;top:369.10px;width:28.00px;height:17.60px;background:#f0c8c9;"></div>
<div class="b" style="left:1499.00px;top:369.10px;width:30.50px;height:17.60px;background:#f0c8c9;"></div>
<div class="b" style="left:1532.20px;top:369.10px;width:34.30px;height:17.60px;background:#f0c8c9;"></div>
<div class="b" style="left:1569.30px;top:369.10px;width:70.70px;height:17.60px;background:#f0c8c9;"></div>
<div class="t v" style="top:372.48px;font-size:12.9px;line-height:12.9px;color:rgba(45,45,45,0.58);font-weight:normal;letter-spacing:0.364px;left:433.75px;transform:scaleX(1.0914);transform-origin:0 50%;">Storitev Montaža; 1 ura x 12</div>
<div class="t v" style="top:372.48px;font-size:12.9px;line-height:12.9px;color:rgba(45,45,45,0.58);font-weight:normal;letter-spacing:0.427px;right:454.67px;text-align:right;transform:scaleX(1.0794);transform-origin:100% 50%;">12,00</div>
<div class="b" style="left:3.00px;top:389.60px;width:81.00px;height:17.60px;background:#c7f5c5;"></div>
<div class="b" style="left:87.00px;top:389.60px;width:43.50px;height:17.60px;background:#c7f5c5;"></div>
<div class="b" style="left:133.50px;top:389.60px;width:43.20px;height:17.60px;background:#c7f5c5;"></div>
<div class="b" style="left:179.70px;top:389.60px;width:24.00px;height:17.60px;background:#c7f5c5;"></div>
<div class="b" style="left:206.60px;top:389.60px;width:222.60px;height:17.60px;background:#c7f5c5;"></div>
<div class="b" style="left:432.00px;top:389.60px;width:520.50px;height:17.60px;background:#c7f5c5;"></div>
<div class="b" style="left:955.50px;top:389.60px;width:94.50px;height:17.60px;background:#c7f5c5;"></div>
<div class="b" style="left:1053.00px;top:389.60px;width:94.20px;height:17.60px;background:#c7f5c5;"></div>
<div class="b" style="left:1150.00px;top:389.60px;width:94.50px;height:17.60px;background:#c7f5c5;"></div>
<div class="b" style="left:1247.50px;top:389.60px;width:94.50px;height:17.60px;background:#c7f5c5;"></div>
<div class="b" style="left:1345.00px;top:389.60px;width:28.00px;height:17.60px;background:#c7f5c5;"></div>
<div class="b" style="left:1376.00px;top:389.60px;width:27.50px;height:17.60px;background:#c7f5c5;"></div>
<div class="b" style="left:1406.50px;top:389.60px;width:27.80px;height:17.60px;background:#c7f5c5;"></div>
<div class="b" style="left:1437.30px;top:389.60px;width:27.70px;height:17.60px;background:#c7f5c5;"></div>
<div class="b" style="left:1468.00px;top:389.60px;width:28.00px;height:17.60px;background:#c7f5c5;"></div>
<div class="b" style="left:1499.00px;top:389.60px;width:30.50px;height:17.60px;background:#c7f5c5;"></div>
<div class="b" style="left:1532.20px;top:389.60px;width:34.30px;height:17.60px;background:#c7f5c5;"></div>
<div class="b" style="left:1569.30px;top:389.60px;width:70.70px;height:17.60px;background:#c7f5c5;"></div>
<div class="t v" style="top:392.98px;font-size:12.9px;line-height:12.9px;color:rgba(45,45,45,0.58);font-weight:normal;letter-spacing:0.328px;left:433.75px;transform:scaleX(1.0795);transform-origin:0 50%;">Spalnica; 1 kos x 4500</div>
<div class="t v" style="top:392.98px;font-size:12.9px;line-height:12.9px;color:rgba(45,45,45,0.58);font-weight:normal;letter-spacing:0.394px;right:551.91px;text-align:right;transform:scaleX(1.0825);transform-origin:100% 50%;">4.500,00</div>
<div class="b" style="left:3.00px;top:410.10px;width:81.00px;height:17.60px;background:#f0c8c9;"></div>
<div class="b" style="left:87.00px;top:410.10px;width:43.50px;height:17.60px;background:#f0c8c9;"></div>
<div class="b" style="left:133.50px;top:410.10px;width:43.20px;height:17.60px;background:#f0c8c9;"></div>
<div class="b" style="left:179.70px;top:410.10px;width:24.00px;height:17.60px;background:#f0c8c9;"></div>
<div class="b" style="left:206.60px;top:410.10px;width:222.60px;height:17.60px;background:#f0c8c9;"></div>
<div class="b" style="left:432.00px;top:410.10px;width:520.50px;height:17.60px;background:#f0c8c9;"></div>
<div class="b" style="left:955.50px;top:410.10px;width:94.50px;height:17.60px;background:#f0c8c9;"></div>
<div class="b" style="left:1053.00px;top:410.10px;width:94.20px;height:17.60px;background:#f0c8c9;"></div>
<div class="b" style="left:1150.00px;top:410.10px;width:94.50px;height:17.60px;background:#f0c8c9;"></div>
<div class="b" style="left:1247.50px;top:410.10px;width:94.50px;height:17.60px;background:#f0c8c9;"></div>
<div class="b" style="left:1345.00px;top:410.10px;width:28.00px;height:17.60px;background:#f0c8c9;"></div>
<div class="b" style="left:1376.00px;top:410.10px;width:27.50px;height:17.60px;background:#f0c8c9;"></div>
<div class="b" style="left:1406.50px;top:410.10px;width:27.80px;height:17.60px;background:#f0c8c9;"></div>
<div class="b" style="left:1437.30px;top:410.10px;width:27.70px;height:17.60px;background:#f0c8c9;"></div>
<div class="b" style="left:1468.00px;top:410.10px;width:28.00px;height:17.60px;background:#f0c8c9;"></div>
<div class="b" style="left:1499.00px;top:410.10px;width:30.50px;height:17.60px;background:#f0c8c9;"></div>
<div class="b" style="left:1532.20px;top:410.10px;width:34.30px;height:17.60px;background:#f0c8c9;"></div>
<div class="b" style="left:1569.30px;top:410.10px;width:70.70px;height:17.60px;background:#f0c8c9;"></div>
<div class="t v" style="top:413.48px;font-size:12.9px;line-height:12.9px;color:rgba(45,45,45,0.58);font-weight:normal;letter-spacing:0.302px;left:433.75px;transform:scaleX(1.0748);transform-origin:0 50%;">Kopalnica spalnica; 1 kos x 2200</div>
<div class="t v" style="top:413.48px;font-size:12.9px;line-height:12.9px;color:rgba(45,45,45,0.58);font-weight:normal;letter-spacing:0.394px;right:454.71px;text-align:right;transform:scaleX(1.0825);transform-origin:100% 50%;">2.200,00</div>
<div class="b" style="left:3.00px;top:430.60px;width:81.00px;height:17.60px;background:#e8cdf8;"></div>
<div class="b" style="left:87.00px;top:430.60px;width:43.50px;height:17.60px;background:#e8cdf8;"></div>
<div class="b" style="left:133.50px;top:430.60px;width:43.20px;height:17.60px;background:#e8cdf8;"></div>
<div class="b" style="left:179.70px;top:430.60px;width:24.00px;height:17.60px;background:#e8cdf8;"></div>
<div class="b" style="left:206.60px;top:430.60px;width:222.60px;height:17.60px;background:#e8cdf8;"></div>
<div class="b" style="left:432.00px;top:430.60px;width:520.50px;height:17.60px;background:#e8cdf8;"></div>
<div class="b" style="left:955.50px;top:430.60px;width:94.50px;height:17.60px;background:#e8cdf8;"></div>
<div class="b" style="left:1053.00px;top:430.60px;width:94.20px;height:17.60px;background:#e8cdf8;"></div>
<div class="b" style="left:1150.00px;top:430.60px;width:94.50px;height:17.60px;background:#e8cdf8;"></div>
<div class="b" style="left:1247.50px;top:430.60px;width:94.50px;height:17.60px;background:#e8cdf8;"></div>
<div class="b" style="left:1345.00px;top:430.60px;width:28.00px;height:17.60px;background:#e8cdf8;"></div>
<div class="b" style="left:1376.00px;top:430.60px;width:27.50px;height:17.60px;background:#e8cdf8;"></div>
<div class="b" style="left:1406.50px;top:430.60px;width:27.80px;height:17.60px;background:#e8cdf8;"></div>
<div class="b" style="left:1437.30px;top:430.60px;width:27.70px;height:17.60px;background:#e8cdf8;"></div>
<div class="b" style="left:1468.00px;top:430.60px;width:28.00px;height:17.60px;background:#e8cdf8;"></div>
<div class="b" style="left:1499.00px;top:430.60px;width:30.50px;height:17.60px;background:#e8cdf8;"></div>
<div class="b" style="left:1532.20px;top:430.60px;width:34.30px;height:17.60px;background:#e8cdf8;"></div>
<div class="b" style="left:1569.30px;top:430.60px;width:70.70px;height:17.60px;background:#e8cdf8;"></div>
<div class="t v" style="top:433.98px;font-size:12.9px;line-height:12.9px;color:rgba(45,45,45,0.58);font-weight:normal;letter-spacing:0.36px;left:433.75px;transform:scaleX(1.0882);transform-origin:0 50%;">Brušenje robno; 10 ura x 25</div>
<div class="t v" style="top:433.98px;font-size:12.9px;line-height:12.9px;color:rgba(45,45,45,0.58);font-weight:normal;letter-spacing:0.407px;right:357.39px;text-align:right;transform:scaleX(1.0774);transform-origin:100% 50%;">250,00</div>
<div class="b" style="left:3.00px;top:451.10px;width:81.00px;height:17.60px;background:#e8cdf8;"></div>
<div class="b" style="left:87.00px;top:451.10px;width:43.50px;height:17.60px;background:#e8cdf8;"></div>
<div class="b" style="left:133.50px;top:451.10px;width:43.20px;height:17.60px;background:#e8cdf8;"></div>
<div class="b" style="left:179.70px;top:451.10px;width:24.00px;height:17.60px;background:#e8cdf8;"></div>
<div class="b" style="left:206.60px;top:451.10px;width:222.60px;height:17.60px;background:#e8cdf8;"></div>
<div class="b" style="left:432.00px;top:451.10px;width:520.50px;height:17.60px;background:#e8cdf8;"></div>
<div class="b" style="left:955.50px;top:451.10px;width:94.50px;height:17.60px;background:#e8cdf8;"></div>
<div class="b" style="left:1053.00px;top:451.10px;width:94.20px;height:17.60px;background:#e8cdf8;"></div>
<div class="b" style="left:1150.00px;top:451.10px;width:94.50px;height:17.60px;background:#e8cdf8;"></div>
<div class="b" style="left:1247.50px;top:451.10px;width:94.50px;height:17.60px;background:#e8cdf8;"></div>
<div class="b" style="left:1345.00px;top:451.10px;width:28.00px;height:17.60px;background:#e8cdf8;"></div>
<div class="b" style="left:1376.00px;top:451.10px;width:27.50px;height:17.60px;background:#e8cdf8;"></div>
<div class="b" style="left:1406.50px;top:451.10px;width:27.80px;height:17.60px;background:#e8cdf8;"></div>
<div class="b" style="left:1437.30px;top:451.10px;width:27.70px;height:17.60px;background:#e8cdf8;"></div>
<div class="b" style="left:1468.00px;top:451.10px;width:28.00px;height:17.60px;background:#e8cdf8;"></div>
<div class="b" style="left:1499.00px;top:451.10px;width:30.50px;height:17.60px;background:#e8cdf8;"></div>
<div class="b" style="left:1532.20px;top:451.10px;width:34.30px;height:17.60px;background:#e8cdf8;"></div>
<div class="b" style="left:1569.30px;top:451.10px;width:70.70px;height:17.60px;background:#e8cdf8;"></div>
<div class="t v" style="top:454.48px;font-size:12.9px;line-height:12.9px;color:rgba(45,45,45,0.58);font-weight:normal;letter-spacing:0.361px;left:433.75px;transform:scaleX(1.0916);transform-origin:0 50%;">Lakiranje; 15 ura x 30</div>
<div class="t v" style="top:454.48px;font-size:12.9px;line-height:12.9px;color:rgba(45,45,45,0.58);font-weight:normal;letter-spacing:0.407px;right:357.39px;text-align:right;transform:scaleX(1.0774);transform-origin:100% 50%;">450,00</div>
<div class="b" style="left:3.00px;top:471.60px;width:81.00px;height:17.60px;background:#e8cdf8;"></div>
<div class="b" style="left:87.00px;top:471.60px;width:43.50px;height:17.60px;background:#e8cdf8;"></div>
<div class="b" style="left:133.50px;top:471.60px;width:43.20px;height:17.60px;background:#e8cdf8;"></div>
<div class="b" style="left:179.70px;top:471.60px;width:24.00px;height:17.60px;background:#e8cdf8;"></div>
<div class="b" style="left:206.60px;top:471.60px;width:222.60px;height:17.60px;background:#e8cdf8;"></div>
<div class="b" style="left:432.00px;top:471.60px;width:520.50px;height:17.60px;background:#e8cdf8;"></div>
<div class="b" style="left:955.50px;top:471.60px;width:94.50px;height:17.60px;background:#e8cdf8;"></div>
<div class="b" style="left:1053.00px;top:471.60px;width:94.20px;height:17.60px;background:#e8cdf8;"></div>
<div class="b" style="left:1150.00px;top:471.60px;width:94.50px;height:17.60px;background:#e8cdf8;"></div>
<div class="b" style="left:1247.50px;top:471.60px;width:94.50px;height:17.60px;background:#e8cdf8;"></div>
<div class="b" style="left:1345.00px;top:471.60px;width:28.00px;height:17.60px;background:#e8cdf8;"></div>
<div class="b" style="left:1376.00px;top:471.60px;width:27.50px;height:17.60px;background:#e8cdf8;"></div>
<div class="b" style="left:1406.50px;top:471.60px;width:27.80px;height:17.60px;background:#e8cdf8;"></div>
<div class="b" style="left:1437.30px;top:471.60px;width:27.70px;height:17.60px;background:#e8cdf8;"></div>
<div class="b" style="left:1468.00px;top:471.60px;width:28.00px;height:17.60px;background:#e8cdf8;"></div>
<div class="b" style="left:1499.00px;top:471.60px;width:30.50px;height:17.60px;background:#e8cdf8;"></div>
<div class="b" style="left:1532.20px;top:471.60px;width:34.30px;height:17.60px;background:#e8cdf8;"></div>
<div class="b" style="left:1569.30px;top:471.60px;width:70.70px;height:17.60px;background:#e8cdf8;"></div>
<div class="t v" style="top:474.98px;font-size:12.9px;line-height:12.9px;color:rgba(45,45,45,0.58);font-weight:normal;letter-spacing:0.357px;left:433.75px;transform:scaleX(1.0846);transform-origin:0 50%;">Montaža; 7 ura x 30</div>
<div class="t v" style="top:474.98px;font-size:12.9px;line-height:12.9px;color:rgba(45,45,45,0.58);font-weight:normal;letter-spacing:0.407px;right:357.39px;text-align:right;transform:scaleX(1.0774);transform-origin:100% 50%;">210,00</div>
<div class="b" style="left:3.00px;top:492.40px;width:81.00px;height:32.60px;background:#f29d4c;"></div>
<div class="b" style="left:87.00px;top:492.40px;width:43.50px;height:32.60px;background:#f29d4c;"></div>
<div class="b" style="left:133.50px;top:492.40px;width:43.20px;height:32.60px;background:#f29d4c;"></div>
<div class="b" style="left:179.70px;top:492.40px;width:24.00px;height:32.60px;background:#f29d4c;"></div>
<div class="b" style="left:206.60px;top:492.40px;width:222.60px;height:32.60px;background:#f29d4c;"></div>
<div class="b" style="left:432.00px;top:492.40px;width:520.50px;height:32.60px;background:#f29d4c;"></div>
<div class="b" style="left:955.50px;top:492.40px;width:94.50px;height:32.60px;background:#f29d4c;"></div>
<div class="b" style="left:1053.00px;top:492.40px;width:94.20px;height:32.60px;background:#f29d4c;"></div>
<div class="b" style="left:1150.00px;top:492.40px;width:94.50px;height:32.60px;background:#f29d4c;"></div>
<div class="b" style="left:1247.50px;top:492.40px;width:94.50px;height:32.60px;background:#f29d4c;"></div>
<div class="b" style="left:1345.00px;top:492.40px;width:28.00px;height:32.60px;background:#f29d4c;"></div>
<div class="b" style="left:1376.00px;top:492.40px;width:27.50px;height:32.60px;background:#f29d4c;"></div>
<div class="b" style="left:1406.50px;top:492.40px;width:27.80px;height:32.60px;background:#f29d4c;"></div>
<div class="b" style="left:1437.30px;top:492.40px;width:27.70px;height:32.60px;background:#f29d4c;"></div>
<div class="b" style="left:1468.00px;top:492.40px;width:28.00px;height:32.60px;background:#f29d4c;"></div>
<div class="b" style="left:1499.00px;top:492.40px;width:30.50px;height:32.60px;background:#f29d4c;"></div>
<div class="b" style="left:1532.20px;top:492.40px;width:34.30px;height:32.60px;background:#f29d4c;"></div>
<div class="b" style="left:1569.30px;top:492.40px;width:70.70px;height:32.60px;background:#f29d4c;"></div>
<div class="t v" style="top:503.06px;font-size:13.4px;line-height:13.4px;color:rgba(45,45,45,0.58);font-weight:normal;letter-spacing:0.293px;left:5.90px;transform:scaleX(1.0527);transform-origin:0 50%;">2108-2</div>
<div class="t v" style="top:503.06px;font-size:13.4px;line-height:13.4px;color:rgba(45,45,45,0.58);font-weight:normal;letter-spacing:0.169px;left:90.10px;transform:scaleX(1.0289);transform-origin:0 50%;">Dejan</div>
<svg class="b" style="left:135.80px;top:494.40px;" width="25.7" height="26" viewBox="0 0 25.7 26"><defs><linearGradient id="rg" x1="0" y1="0" x2="0" y2="1"><stop offset="0" stop-color="#f3e6c4"/><stop offset="1" stop-color="#b89668"/></linearGradient><linearGradient id="ag" x1="0" y1="0" x2="0" y2="1"><stop offset="0" stop-color="#3b7fc0"/><stop offset="1" stop-color="#13477e"/></linearGradient></defs><rect x="0" y="0" width="25.7" height="26" fill="#fff"/><path d="M3.2 7.8 L9.2 4 V6.6 H11.6 V9 H9.2 V11.6 Z" fill="url(#ag)"/><path d="M22.5 7.8 L16.5 4 V6.6 H14.1 V9 H16.5 V11.6 Z" fill="url(#ag)"/><rect x="2.9" y="14.2" width="20.3" height="8.6" rx="0.8" fill="url(#rg)"/><rect x="3.90" y="16.2" width="1.1" height="6" fill="#6e5432"/><rect x="6.35" y="17.2" width="1.1" height="5" fill="#6e5432"/><rect x="8.80" y="16.2" width="1.1" height="6" fill="#6e5432"/><rect x="11.25" y="17.2" width="1.1" height="5" fill="#6e5432"/><rect x="13.70" y="16.2" width="1.1" height="6" fill="#6e5432"/><rect x="16.15" y="17.2" width="1.1" height="5" fill="#6e5432"/><rect x="18.60" y="16.2" width="1.1" height="6" fill="#6e5432"/><rect x="21.05" y="17.2" width="1.1" height="5" fill="#6e5432"/></svg>
<div class="b" style="left:181.70px;top:502.40px;width:12.00px;height:11.50px;background:#fff;"></div>
<svg class="b" style="left:181.70px;top:502.40px;" width="12" height="11.5" viewBox="0 0 12 11.5"><path d="M2.6 3.3 L9.4 3.3 L6 8.6 Z" fill="#777"/></svg>
<div class="t v" style="top:503.06px;font-size:13.4px;line-height:13.4px;color:rgba(85,40,185,0.85);font-weight:normal;letter-spacing:-0.058px;left:209.50px;transform:scaleX(0.9897);transform-origin:0 50%;text-decoration:underline;">PETROL D.D.</div>
<div class="t v" style="top:503.06px;font-size:13.4px;line-height:13.4px;color:#1c1cc8;font-weight:bold;letter-spacing:0.332px;left:435.00px;transform:scaleX(1.0597);transform-origin:0 50%;text-decoration:underline;">Dnevna soba</div>
<div class="t v" style="top:503.06px;font-size:13.4px;line-height:13.4px;color:rgba(45,45,45,0.58);font-weight:normal;letter-spacing:0.283px;right:552.32px;text-align:right;transform:scaleX(1.0570);transform-origin:100% 50%;">1.489,60</div>
<div class="t v" style="top:503.06px;font-size:13.4px;line-height:13.4px;color:rgba(45,45,45,0.58);font-weight:normal;letter-spacing:0.285px;right:455.11px;text-align:right;transform:scaleX(1.0521);transform-origin:100% 50%;">500,00</div>
<div class="t v" style="top:503.06px;font-size:13.4px;line-height:13.4px;color:rgba(45,45,45,0.58);font-weight:normal;letter-spacing:0.285px;right:357.81px;text-align:right;transform:scaleX(1.0521);transform-origin:100% 50%;">400,00</div>
<div class="t v" style="top:503.06px;font-size:13.4px;line-height:13.4px;color:rgba(45,45,45,0.58);font-weight:normal;letter-spacing:0.285px;right:260.31px;text-align:right;transform:scaleX(1.0521);transform-origin:100% 50%;">589,60</div>
<svg class="b" style="left:1408.50px;top:496.90px;" width="24" height="24" viewBox="0 0 24 24"><path d="M6 0.9 H16.6 Q19.2 0.9 19.2 3.5 V8.2" fill="none" stroke="#8088b4" stroke-width="1.8"/><path d="M6 0.9 L2.2 4.9 V18.8 Q2.2 21.5 4.8 21.5 H12.2" fill="none" stroke="#8088b4" stroke-width="1.8"/><path d="M6.2 0.9 L2.2 5 H6.2 Z" fill="#3f6fd0"/><path d="M16.2 7.9 V21.6 M9.4 14.7 H23.1" stroke="#6cc066" stroke-width="3"/></svg>
<svg class="b" style="left:1439.80px;top:497.40px;" width="22" height="22" viewBox="0 0 22 22"><defs><linearGradient id="eg" x1="0" y1="0" x2="1" y2="1"><stop offset="0" stop-color="#ffffff"/><stop offset="0.55" stop-color="#eef2ff"/><stop offset="1" stop-color="#a9cdf2"/></linearGradient></defs><rect x="2" y="2.4" width="15.8" height="18.2" rx="1.2" fill="url(#eg)" stroke="#8f96c6" stroke-width="1.7"/><path d="M6.2 17.8 L18.2 5.4" stroke="#6f70a8" stroke-width="5" stroke-linecap="round"/><path d="M6.2 17.8 L18.2 5.4" stroke="#a9a6dc" stroke-width="2.8" stroke-linecap="round"/><path d="M5.4 18.8 L8.4 15.6" stroke="#5a6040" stroke-width="3" stroke-linecap="round"/><circle cx="19.2" cy="4.4" r="2.3" fill="#c8461e"/><circle cx="18.4" cy="5.2" r="1.1" fill="#f0a040"/></svg>
<svg class="b" style="left:1503.00px;top:497.20px;" width="23" height="23" viewBox="0 0 23 23"><g transform="rotate(-12 11 11.5)"><rect x="2.6" y="3.6" width="16.8" height="16" rx="2.6" fill="#a9a9ac"/><rect x="4.2" y="4.6" width="14" height="12.2" rx="1.6" fill="#dcdcde"/></g><path d="M8.4 8.4 Q10.4 4.4 13.8 7.2" fill="none" stroke="#262626" stroke-width="2.1" stroke-linecap="round"/><path d="M5 12 L8.6 12.8 L9.4 15.8 L5.4 15.2 Z" fill="#363636"/><path d="M6.2 11.2 L17 13.6" stroke="#ffffff" stroke-width="1.8"/><path d="M3.6 18.6 L11.6 20.8 L20 17.6" fill="none" stroke="#a8a8aa" stroke-width="1.1"/></svg>
<svg class="b" style="left:1540.50px;top:497.90px;" width="25" height="24" viewBox="0 0 25 24"><path d="M6 0.8 H13.7 Q15.2 0.8 15.2 2.3 V16.2 Q15.2 17.7 13.7 17.7 H2.3 Q0.8 17.7 0.8 16.2 V6 Z" fill="none" stroke="#fbe8d8" stroke-width="3.6" stroke-linejoin="round"/><path d="M6 0.8 H13.7 Q15.2 0.8 15.2 2.3 V16.2 Q15.2 17.7 13.7 17.7 H2.3 Q0.8 17.7 0.8 16.2 V6 Z" fill="#f2a462" stroke="#5aa2dc" stroke-width="1.6" stroke-linejoin="round"/><path d="M6 0.8 V6 H0.8" fill="#b4defa" stroke="#5aa2dc" stroke-width="1.4" stroke-linejoin="round"/><path d="M14.5 5.6 H21.8 Q23.3 5.6 23.3 7.1 V20.9 Q23.3 22.4 21.8 22.4 H10.6 Q9.1 22.4 9.1 20.9 V11 Z" fill="none" stroke="#fbe8d8" stroke-width="3.6" stroke-linejoin="round"/><path d="M14.5 5.6 H21.8 Q23.3 5.6 23.3 7.1 V20.9 Q23.3 22.4 21.8 22.4 H10.6 Q9.1 22.4 9.1 20.9 V11 Z" fill="#f2a462" stroke="#5aa2dc" stroke-width="1.6" stroke-linejoin="round"/><path d="M14.5 5.6 V11 H9.1" fill="#b4defa" stroke="#5aa2dc" stroke-width="1.4" stroke-linejoin="round"/></svg>
<div class="b" style="left:1577.00px;top:501.10px;width:16.80px;height:17.00px;background:#fff;border:1.6px solid #747474;border-radius:3px;box-sizing:border-box;"></div>
<div class="b" style="left:3.00px;top:528.30px;width:81.00px;height:32.60px;background:#c3dcf5;"></div>
<div class="b" style="left:87.00px;top:528.30px;width:43.50px;height:32.60px;background:#c3dcf5;"></div>
<div class="b" style="left:133.50px;top:528.30px;width:43.20px;height:32.60px;background:#c3dcf5;"></div>
<div class="b" style="left:179.70px;top:528.30px;width:24.00px;height:32.60px;background:#c3dcf5;"></div>
<div class="b" style="left:206.60px;top:528.30px;width:222.60px;height:32.60px;background:#c3dcf5;"></div>
<div class="b" style="left:432.00px;top:528.30px;width:520.50px;height:32.60px;background:#c3dcf5;"></div>
<div class="b" style="left:955.50px;top:528.30px;width:94.50px;height:32.60px;background:#c3dcf5;"></div>
<div class="b" style="left:1053.00px;top:528.30px;width:94.20px;height:32.60px;background:#c3dcf5;"></div>
<div class="b" style="left:1150.00px;top:528.30px;width:94.50px;height:32.60px;background:#c3dcf5;"></div>
<div class="b" style="left:1247.50px;top:528.30px;width:94.50px;height:32.60px;background:#c3dcf5;"></div>
<div class="b" style="left:1345.00px;top:528.30px;width:28.00px;height:32.60px;background:#c3dcf5;"></div>
<div class="b" style="left:1376.00px;top:528.30px;width:27.50px;height:32.60px;background:#c3dcf5;"></div>
<div class="b" style="left:1406.50px;top:528.30px;width:27.80px;height:32.60px;background:#c3dcf5;"></div>
<div class="b" style="left:1437.30px;top:528.30px;width:27.70px;height:32.60px;background:#c3dcf5;"></div>
<div class="b" style="left:1468.00px;top:528.30px;width:28.00px;height:32.60px;background:#c3dcf5;"></div>
<div class="b" style="left:1499.00px;top:528.30px;width:30.50px;height:32.60px;background:#c3dcf5;"></div>
<div class="b" style="left:1532.20px;top:528.30px;width:34.30px;height:32.60px;background:#c3dcf5;"></div>
<div class="b" style="left:1569.30px;top:528.30px;width:70.70px;height:32.60px;background:#c3dcf5;"></div>
<div class="t v" style="top:538.96px;font-size:13.4px;line-height:13.4px;color:rgba(45,45,45,0.58);font-weight:normal;letter-spacing:0.217px;left:5.90px;transform:scaleX(1.0436);transform-origin:0 50%;">1</div>
<div class="t v" style="top:538.96px;font-size:13.4px;line-height:13.4px;color:rgba(45,45,45,0.58);font-weight:normal;letter-spacing:0.405px;left:90.10px;transform:scaleX(1.0680);transform-origin:0 50%;">Ivo</div>
<svg class="b" style="left:135.80px;top:530.30px;" width="25.7" height="26" viewBox="0 0 25.7 26"><defs><linearGradient id="rg" x1="0" y1="0" x2="0" y2="1"><stop offset="0" stop-color="#f3e6c4"/><stop offset="1" stop-color="#b89668"/></linearGradient><linearGradient id="ag" x1="0" y1="0" x2="0" y2="1"><stop offset="0" stop-color="#3b7fc0"/><stop offset="1" stop-color="#13477e"/></linearGradient></defs><rect x="0" y="0" width="25.7" height="26" fill="#fff"/><path d="M3.2 7.8 L9.2 4 V6.6 H11.6 V9 H9.2 V11.6 Z" fill="url(#ag)"/><path d="M22.5 7.8 L16.5 4 V6.6 H14.1 V9 H16.5 V11.6 Z" fill="url(#ag)"/><rect x="2.9" y="14.2" width="20.3" height="8.6" rx="0.8" fill="url(#rg)"/><rect x="3.90" y="16.2" width="1.1" height="6" fill="#6e5432"/><rect x="6.35" y="17.2" width="1.1" height="5" fill="#6e5432"/><rect x="8.80" y="16.2" width="1.1" height="6" fill="#6e5432"/><rect x="11.25" y="17.2" width="1.1" height="5" fill="#6e5432"/><rect x="13.70" y="16.2" width="1.1" height="6" fill="#6e5432"/><rect x="16.15" y="17.2" width="1.1" height="5" fill="#6e5432"/><rect x="18.60" y="16.2" width="1.1" height="6" fill="#6e5432"/><rect x="21.05" y="17.2" width="1.1" height="5" fill="#6e5432"/></svg>
<div class="b" style="left:181.70px;top:538.30px;width:12.00px;height:11.50px;background:#fff;"></div>
<svg class="b" style="left:181.70px;top:538.30px;" width="12" height="11.5" viewBox="0 0 12 11.5"><path d="M3.5 2.5 L9.5 5.8 L3.5 9.1 Z" fill="#777"/></svg>
<div class="t v" style="top:538.96px;font-size:13.4px;line-height:13.4px;color:rgba(30,30,205,0.88);font-weight:normal;letter-spacing:0.02px;left:209.50px;transform:scaleX(1.0037);transform-origin:0 50%;text-decoration:underline;">OMV SLOVENIJA D.O.O.</div>
<div class="t v" style="top:538.96px;font-size:13.4px;line-height:13.4px;color:rgba(45,45,45,0.58);font-weight:normal;letter-spacing:0.221px;left:435.00px;transform:scaleX(1.0480);transform-origin:0 50%;text-decoration:underline;">Jaka Racman - Dnevna soba(20.08.2021)</div>
<div class="t v" style="top:538.96px;font-size:13.4px;line-height:13.4px;color:rgba(45,45,45,0.58);font-weight:normal;letter-spacing:0.283px;right:552.32px;text-align:right;transform:scaleX(1.0570);transform-origin:100% 50%;">1.489,60</div>
<div class="t v" style="top:538.96px;font-size:13.4px;line-height:13.4px;color:rgba(45,45,45,0.58);font-weight:normal;letter-spacing:0.285px;right:455.11px;text-align:right;transform:scaleX(1.0521);transform-origin:100% 50%;">500,00</div>
<div class="t v" style="top:538.96px;font-size:13.4px;line-height:13.4px;color:rgba(45,45,45,0.58);font-weight:normal;letter-spacing:0.285px;right:357.81px;text-align:right;transform:scaleX(1.0521);transform-origin:100% 50%;">400,00</div>
<div class="t v" style="top:538.96px;font-size:13.4px;line-height:13.4px;color:rgba(45,45,45,0.58);font-weight:normal;letter-spacing:0.285px;right:260.31px;text-align:right;transform:scaleX(1.0521);transform-origin:100% 50%;">589,60</div>
<svg class="b" style="left:1439.80px;top:533.30px;" width="22" height="22" viewBox="0 0 22 22"><defs><linearGradient id="eg" x1="0" y1="0" x2="1" y2="1"><stop offset="0" stop-color="#ffffff"/><stop offset="0.55" stop-color="#eef2ff"/><stop offset="1" stop-color="#a9cdf2"/></linearGradient></defs><rect x="2" y="2.4" width="15.8" height="18.2" rx="1.2" fill="url(#eg)" stroke="#8f96c6" stroke-width="1.7"/><path d="M6.2 17.8 L18.2 5.4" stroke="#6f70a8" stroke-width="5" stroke-linecap="round"/><path d="M6.2 17.8 L18.2 5.4" stroke="#a9a6dc" stroke-width="2.8" stroke-linecap="round"/><path d="M5.4 18.8 L8.4 15.6" stroke="#5a6040" stroke-width="3" stroke-linecap="round"/><circle cx="19.2" cy="4.4" r="2.3" fill="#c8461e"/><circle cx="18.4" cy="5.2" r="1.1" fill="#f0a040"/></svg>
<svg class="b" style="left:1503.00px;top:533.10px;" width="23" height="23" viewBox="0 0 23 23"><g transform="rotate(-12 11 11.5)"><rect x="2.6" y="3.6" width="16.8" height="16" rx="2.6" fill="#a9a9ac"/><rect x="4.2" y="4.6" width="14" height="12.2" rx="1.6" fill="#dcdcde"/></g><path d="M8.4 8.4 Q10.4 4.4 13.8 7.2" fill="none" stroke="#262626" stroke-width="2.1" stroke-linecap="round"/><path d="M5 12 L8.6 12.8 L9.4 15.8 L5.4 15.2 Z" fill="#363636"/><path d="M6.2 11.2 L17 13.6" stroke="#ffffff" stroke-width="1.8"/><path d="M3.6 18.6 L11.6 20.8 L20 17.6" fill="none" stroke="#a8a8aa" stroke-width="1.1"/></svg>
<svg class="b" style="left:1540.50px;top:533.80px;" width="25" height="24" viewBox="0 0 25 24"><path d="M6 0.8 H13.7 Q15.2 0.8 15.2 2.3 V16.2 Q15.2 17.7 13.7 17.7 H2.3 Q0.8 17.7 0.8 16.2 V6 Z" fill="#dcedfb" stroke="#5aa2dc" stroke-width="1.6" stroke-linejoin="round"/><path d="M6 0.8 V6 H0.8" fill="#b4defa" stroke="#5aa2dc" stroke-width="1.4" stroke-linejoin="round"/><path d="M14.5 5.6 H21.8 Q23.3 5.6 23.3 7.1 V20.9 Q23.3 22.4 21.8 22.4 H10.6 Q9.1 22.4 9.1 20.9 V11 Z" fill="#dcedfb" stroke="#5aa2dc" stroke-width="1.6" stroke-linejoin="round"/><path d="M14.5 5.6 V11 H9.1" fill="#b4defa" stroke="#5aa2dc" stroke-width="1.4" stroke-linejoin="round"/></svg>
<div class="b" style="left:1577.00px;top:537.00px;width:16.80px;height:17.00px;background:#fff;border:1.6px solid #747474;border-radius:3px;box-sizing:border-box;"></div>
<div class="b" style="left:3.00px;top:564.20px;width:81.00px;height:32.60px;background:#f29d4c;"></div>
<div class="b" style="left:87.00px;top:564.20px;width:43.50px;height:32.60px;background:#f29d4c;"></div>
<div class="b" style="left:133.50px;top:564.20px;width:43.20px;height:32.60px;background:#f29d4c;"></div>
<div class="b" style="left:179.70px;top:564.20px;width:24.00px;height:32.60px;background:#f29d4c;"></div>
<div class="b" style="left:206.60px;top:564.20px;width:222.60px;height:32.60px;background:#f29d4c;"></div>
<div class="b" style="left:432.00px;top:564.20px;width:520.50px;height:32.60px;background:#f29d4c;"></div>
<div class="b" style="left:955.50px;top:564.20px;width:94.50px;height:32.60px;background:#f29d4c;"></div>
<div class="b" style="left:1053.00px;top:564.20px;width:94.20px;height:32.60px;background:#f29d4c;"></div>
<div class="b" style="left:1150.00px;top:564.20px;width:94.50px;height:32.60px;background:#f29d4c;"></div>
<div class="b" style="left:1247.50px;top:564.20px;width:94.50px;height:32.60px;background:#f29d4c;"></div>
<div class="b" style="left:1345.00px;top:564.20px;width:28.00px;height:32.60px;background:#f29d4c;"></div>
<div class="b" style="left:1376.00px;top:564.20px;width:27.50px;height:32.60px;background:#f29d4c;"></div>
<div class="b" style="left:1406.50px;top:564.20px;width:27.80px;height:32.60px;background:#f29d4c;"></div>
<div class="b" style="left:1437.30px;top:564.20px;width:27.70px;height:32.60px;background:#f29d4c;"></div>
<div class="b" style="left:1468.00px;top:564.20px;width:28.00px;height:32.60px;background:#f29d4c;"></div>
<div class="b" style="left:1499.00px;top:564.20px;width:30.50px;height:32.60px;background:#f29d4c;"></div>
<div class="b" style="left:1532.20px;top:564.20px;width:34.30px;height:32.60px;background:#f29d4c;"></div>
<div class="b" style="left:1569.30px;top:564.20px;width:70.70px;height:32.60px;background:#f29d4c;"></div>
<div class="t v" style="top:574.86px;font-size:13.4px;line-height:13.4px;color:rgba(45,45,45,0.58);font-weight:normal;letter-spacing:0.293px;left:5.90px;transform:scaleX(1.0527);transform-origin:0 50%;">2108-1</div>
<div class="t v" style="top:574.86px;font-size:13.4px;line-height:13.4px;color:rgba(45,45,45,0.58);font-weight:normal;letter-spacing:0.405px;left:90.10px;transform:scaleX(1.0680);transform-origin:0 50%;">Ivo</div>
<svg class="b" style="left:135.80px;top:568.80px;" width="21.3" height="21" viewBox="0 0 21.3 21"><defs><linearGradient id="cg" x1="0" y1="0" x2="0" y2="1"><stop offset="0" stop-color="#a6cff8"/><stop offset="0.45" stop-color="#3f86e8"/><stop offset="1" stop-color="#2a62c8"/></linearGradient><clipPath id="cc"><rect x="0" y="0" width="21.3" height="21"/></clipPath></defs><rect x="0" y="0" width="21.3" height="21" fill="#fff"/><g clip-path="url(#cc)" fill="none" stroke="url(#cg)" stroke-width="4.4" stroke-linecap="round" stroke-linejoin="round"><path d="M1.6 3.6 L8.6 10.8 L1.6 18"/><path d="M12 3.6 L19 10.8 L12 18"/></g></svg>
<div class="b" style="left:181.70px;top:574.20px;width:12.00px;height:11.50px;background:#fff;"></div>
<svg class="b" style="left:181.70px;top:574.20px;" width="12" height="11.5" viewBox="0 0 12 11.5"><path d="M2.6 3.3 L9.4 3.3 L6 8.6 Z" fill="#777"/></svg>
<div class="t v" style="top:574.86px;font-size:13.4px;line-height:13.4px;color:rgba(85,40,185,0.85);font-weight:normal;letter-spacing:0.224px;left:209.50px;transform:scaleX(1.0530);transform-origin:0 50%;text-decoration:underline;">Banka Intesa Sanpaolo d....</div>
<div class="t v" style="top:574.86px;font-size:13.4px;line-height:13.4px;color:#1c1cc8;font-weight:bold;letter-spacing:0.572px;left:435.00px;transform:scaleX(1.1047);transform-origin:0 50%;text-decoration:underline;">Vrata</div>
<div class="t v" style="top:574.86px;font-size:13.4px;line-height:13.4px;color:rgba(45,45,45,0.58);font-weight:normal;letter-spacing:0.283px;right:552.32px;text-align:right;transform:scaleX(1.0570);transform-origin:100% 50%;">7.219,05</div>
<div class="t v" style="top:574.86px;font-size:13.4px;line-height:13.4px;color:rgba(45,45,45,0.58);font-weight:normal;letter-spacing:0.283px;right:455.12px;text-align:right;transform:scaleX(1.0570);transform-origin:100% 50%;">2.750,00</div>
<div class="t v" style="top:574.86px;font-size:13.4px;line-height:13.4px;color:rgba(45,45,45,0.58);font-weight:normal;letter-spacing:0.283px;right:357.82px;text-align:right;transform:scaleX(1.0570);transform-origin:100% 50%;">1.320,00</div>
<div class="t v" style="top:574.86px;font-size:13.4px;line-height:13.4px;color:rgba(45,45,45,0.58);font-weight:normal;letter-spacing:0.283px;right:260.32px;text-align:right;transform:scaleX(1.0570);transform-origin:100% 50%;">3.149,05</div>
<svg class="b" style="left:1408.50px;top:568.70px;" width="24" height="24" viewBox="0 0 24 24"><path d="M6 0.9 H16.6 Q19.2 0.9 19.2 3.5 V8.2" fill="none" stroke="#8088b4" stroke-width="1.8"/><path d="M6 0.9 L2.2 4.9 V18.8 Q2.2 21.5 4.8 21.5 H12.2" fill="none" stroke="#8088b4" stroke-width="1.8"/><path d="M6.2 0.9 L2.2 5 H6.2 Z" fill="#3f6fd0"/><path d="M16.2 7.9 V21.6 M9.4 14.7 H23.1" stroke="#6cc066" stroke-width="3"/></svg>
<svg class="b" style="left:1439.80px;top:569.20px;" width="22" height="22" viewBox="0 0 22 22"><defs><linearGradient id="eg" x1="0" y1="0" x2="1" y2="1"><stop offset="0" stop-color="#ffffff"/><stop offset="0.55" stop-color="#eef2ff"/><stop offset="1" stop-color="#a9cdf2"/></linearGradient></defs><rect x="2" y="2.4" width="15.8" height="18.2" rx="1.2" fill="url(#eg)" stroke="#8f96c6" stroke-width="1.7"/><path d="M6.2 17.8 L18.2 5.4" stroke="#6f70a8" stroke-width="5" stroke-linecap="round"/><path d="M6.2 17.8 L18.2 5.4" stroke="#a9a6dc" stroke-width="2.8" stroke-linecap="round"/><path d="M5.4 18.8 L8.4 15.6" stroke="#5a6040" stroke-width="3" stroke-linecap="round"/><circle cx="19.2" cy="4.4" r="2.3" fill="#c8461e"/><circle cx="18.4" cy="5.2" r="1.1" fill="#f0a040"/></svg>
<svg class="b" style="left:1503.00px;top:569.00px;" width="23" height="23" viewBox="0 0 23 23"><g transform="rotate(-12 11 11.5)"><rect x="2.6" y="3.6" width="16.8" height="16" rx="2.6" fill="#a9a9ac"/><rect x="4.2" y="4.6" width="14" height="12.2" rx="1.6" fill="#dcdcde"/></g><path d="M8.4 8.4 Q10.4 4.4 13.8 7.2" fill="none" stroke="#262626" stroke-width="2.1" stroke-linecap="round"/><path d="M5 12 L8.6 12.8 L9.4 15.8 L5.4 15.2 Z" fill="#363636"/><path d="M6.2 11.2 L17 13.6" stroke="#ffffff" stroke-width="1.8"/><path d="M3.6 18.6 L11.6 20.8 L20 17.6" fill="none" stroke="#a8a8aa" stroke-width="1.1"/></svg>
<svg class="b" style="left:1540.50px;top:569.70px;" width="25" height="24" viewBox="0 0 25 24"><path d="M6 0.8 H13.7 Q15.2 0.8 15.2 2.3 V16.2 Q15.2 17.7 13.7 17.7 H2.3 Q0.8 17.7 0.8 16.2 V6 Z" fill="none" stroke="#fbe8d8" stroke-width="3.6" stroke-linejoin="round"/><path d="M6 0.8 H13.7 Q15.2 0.8 15.2 2.3 V16.2 Q15.2 17.7 13.7 17.7 H2.3 Q0.8 17.7 0.8 16.2 V6 Z" fill="#f2a462" stroke="#5aa2dc" stroke-width="1.6" stroke-linejoin="round"/><path d="M6 0.8 V6 H0.8" fill="#b4defa" stroke="#5aa2dc" stroke-width="1.4" stroke-linejoin="round"/><path d="M14.5 5.6 H21.8 Q23.3 5.6 23.3 7.1 V20.9 Q23.3 22.4 21.8 22.4 H10.6 Q9.1 22.4 9.1 20.9 V11 Z" fill="none" stroke="#fbe8d8" stroke-width="3.6" stroke-linejoin="round"/><path d="M14.5 5.6 H21.8 Q23.3 5.6 23.3 7.1 V20.9 Q23.3 22.4 21.8 22.4 H10.6 Q9.1 22.4 9.1 20.9 V11 Z" fill="#f2a462" stroke="#5aa2dc" stroke-width="1.6" stroke-linejoin="round"/><path d="M14.5 5.6 V11 H9.1" fill="#b4defa" stroke="#5aa2dc" stroke-width="1.4" stroke-linejoin="round"/></svg>
<div class="b" style="left:1577.00px;top:572.90px;width:16.80px;height:17.00px;background:#fff;border:1.6px solid #747474;border-radius:3px;box-sizing:border-box;"></div>
<div class="b" style="left:3.00px;top:600.10px;width:81.00px;height:32.60px;background:#c3dcf5;"></div>
<div class="b" style="left:87.00px;top:600.10px;width:43.50px;height:32.60px;background:#c3dcf5;"></div>
<div class="b" style="left:133.50px;top:600.10px;width:43.20px;height:32.60px;background:#c3dcf5;"></div>
<div class="b" style="left:179.70px;top:600.10px;width:24.00px;height:32.60px;background:#c3dcf5;"></div>
<div class="b" style="left:206.60px;top:600.10px;width:222.60px;height:32.60px;background:#c3dcf5;"></div>
<div class="b" style="left:432.00px;top:600.10px;width:520.50px;height:32.60px;background:#c3dcf5;"></div>
<div class="b" style="left:955.50px;top:600.10px;width:94.50px;height:32.60px;background:#c3dcf5;"></div>
<div class="b" style="left:1053.00px;top:600.10px;width:94.20px;height:32.60px;background:#c3dcf5;"></div>
<div class="b" style="left:1150.00px;top:600.10px;width:94.50px;height:32.60px;background:#c3dcf5;"></div>
<div class="b" style="left:1247.50px;top:600.10px;width:94.50px;height:32.60px;background:#c3dcf5;"></div>
<div class="b" style="left:1345.00px;top:600.10px;width:28.00px;height:32.60px;background:#c3dcf5;"></div>
<div class="b" style="left:1376.00px;top:600.10px;width:27.50px;height:32.60px;background:#c3dcf5;"></div>
<div class="b" style="left:1406.50px;top:600.10px;width:27.80px;height:32.60px;background:#c3dcf5;"></div>
<div class="b" style="left:1437.30px;top:600.10px;width:27.70px;height:32.60px;background:#c3dcf5;"></div>
<div class="b" style="left:1468.00px;top:600.10px;width:28.00px;height:32.60px;background:#c3dcf5;"></div>
<div class="b" style="left:1499.00px;top:600.10px;width:30.50px;height:32.60px;background:#c3dcf5;"></div>
<div class="b" style="left:1532.20px;top:600.10px;width:34.30px;height:32.60px;background:#c3dcf5;"></div>
<div class="b" style="left:1569.30px;top:600.10px;width:70.70px;height:32.60px;background:#c3dcf5;"></div>
<div class="t v" style="top:610.76px;font-size:13.4px;line-height:13.4px;color:rgba(45,45,45,0.58);font-weight:normal;letter-spacing:0.217px;left:5.90px;transform:scaleX(1.0436);transform-origin:0 50%;">1</div>
<div class="t v" style="top:610.76px;font-size:13.4px;line-height:13.4px;color:rgba(45,45,45,0.58);font-weight:normal;letter-spacing:0.405px;left:90.10px;transform:scaleX(1.0680);transform-origin:0 50%;">Ivo</div>
<svg class="b" style="left:135.80px;top:604.70px;" width="21.3" height="21" viewBox="0 0 21.3 21"><defs><linearGradient id="cg" x1="0" y1="0" x2="0" y2="1"><stop offset="0" stop-color="#a6cff8"/><stop offset="0.45" stop-color="#3f86e8"/><stop offset="1" stop-color="#2a62c8"/></linearGradient><clipPath id="cc"><rect x="0" y="0" width="21.3" height="21"/></clipPath></defs><rect x="0" y="0" width="21.3" height="21" fill="#fff"/><g clip-path="url(#cc)" fill="none" stroke="url(#cg)" stroke-width="4.4" stroke-linecap="round" stroke-linejoin="round"><path d="M1.6 3.6 L8.6 10.8 L1.6 18"/><path d="M12 3.6 L19 10.8 L12 18"/></g></svg>
<div class="b" style="left:181.70px;top:610.10px;width:12.00px;height:11.50px;background:#fff;"></div>
<svg class="b" style="left:181.70px;top:610.10px;" width="12" height="11.5" viewBox="0 0 12 11.5"><path d="M3.5 2.5 L9.5 5.8 L3.5 9.1 Z" fill="#777"/></svg>
<div class="t v" style="top:610.76px;font-size:13.4px;line-height:13.4px;color:rgba(30,30,205,0.88);font-weight:normal;letter-spacing:0.002px;left:209.50px;transform:scaleX(1.0004);transform-origin:0 50%;text-decoration:underline;">MERKUR TRGOVINA, D.O.O.</div>
<div class="t v" style="top:610.76px;font-size:13.4px;line-height:13.4px;color:rgba(45,45,45,0.58);font-weight:normal;letter-spacing:0.327px;left:435.00px;transform:scaleX(1.0730);transform-origin:0 50%;text-decoration:underline;">Vrata(18.08.2021)</div>
<div class="t v" style="top:610.76px;font-size:13.4px;line-height:13.4px;color:rgba(45,45,45,0.58);font-weight:normal;letter-spacing:0.283px;right:552.32px;text-align:right;transform:scaleX(1.0570);transform-origin:100% 50%;">7.219,05</div>
<div class="t v" style="top:610.76px;font-size:13.4px;line-height:13.4px;color:rgba(45,45,45,0.58);font-weight:normal;letter-spacing:0.283px;right:455.12px;text-align:right;transform:scaleX(1.0570);transform-origin:100% 50%;">2.750,00</div>
<div class="t v" style="top:610.76px;font-size:13.4px;line-height:13.4px;color:rgba(45,45,45,0.58);font-weight:normal;letter-spacing:0.283px;right:357.82px;text-align:right;transform:scaleX(1.0570);transform-origin:100% 50%;">1.320,00</div>
<div class="t v" style="top:610.76px;font-size:13.4px;line-height:13.4px;color:rgba(45,45,45,0.58);font-weight:normal;letter-spacing:0.283px;right:260.32px;text-align:right;transform:scaleX(1.0570);transform-origin:100% 50%;">3.149,05</div>
<svg class="b" style="left:1439.80px;top:605.10px;" width="22" height="22" viewBox="0 0 22 22"><defs><linearGradient id="eg" x1="0" y1="0" x2="1" y2="1"><stop offset="0" stop-color="#ffffff"/><stop offset="0.55" stop-color="#eef2ff"/><stop offset="1" stop-color="#a9cdf2"/></linearGradient></defs><rect x="2" y="2.4" width="15.8" height="18.2" rx="1.2" fill="url(#eg)" stroke="#8f96c6" stroke-width="1.7"/><path d="M6.2 17.8 L18.2 5.4" stroke="#6f70a8" stroke-width="5" stroke-linecap="round"/><path d="M6.2 17.8 L18.2 5.4" stroke="#a9a6dc" stroke-width="2.8" stroke-linecap="round"/><path d="M5.4 18.8 L8.4 15.6" stroke="#5a6040" stroke-width="3" stroke-linecap="round"/><circle cx="19.2" cy="4.4" r="2.3" fill="#c8461e"/><circle cx="18.4" cy="5.2" r="1.1" fill="#f0a040"/></svg>
<svg class="b" style="left:1503.00px;top:604.90px;" width="23" height="23" viewBox="0 0 23 23"><g transform="rotate(-12 11 11.5)"><rect x="2.6" y="3.6" width="16.8" height="16" rx="2.6" fill="#a9a9ac"/><rect x="4.2" y="4.6" width="14" height="12.2" rx="1.6" fill="#dcdcde"/></g><path d="M8.4 8.4 Q10.4 4.4 13.8 7.2" fill="none" stroke="#262626" stroke-width="2.1" stroke-linecap="round"/><path d="M5 12 L8.6 12.8 L9.4 15.8 L5.4 15.2 Z" fill="#363636"/><path d="M6.2 11.2 L17 13.6" stroke="#ffffff" stroke-width="1.8"/><path d="M3.6 18.6 L11.6 20.8 L20 17.6" fill="none" stroke="#a8a8aa" stroke-width="1.1"/></svg>
<svg class="b" style="left:1540.50px;top:605.60px;" width="25" height="24" viewBox="0 0 25 24"><path d="M6 0.8 H13.7 Q15.2 0.8 15.2 2.3 V16.2 Q15.2 17.7 13.7 17.7 H2.3 Q0.8 17.7 0.8 16.2 V6 Z" fill="#dcedfb" stroke="#5aa2dc" stroke-width="1.6" stroke-linejoin="round"/><path d="M6 0.8 V6 H0.8" fill="#b4defa" stroke="#5aa2dc" stroke-width="1.4" stroke-linejoin="round"/><path d="M14.5 5.6 H21.8 Q23.3 5.6 23.3 7.1 V20.9 Q23.3 22.4 21.8 22.4 H10.6 Q9.1 22.4 9.1 20.9 V11 Z" fill="#dcedfb" stroke="#5aa2dc" stroke-width="1.6" stroke-linejoin="round"/><path d="M14.5 5.6 V11 H9.1" fill="#b4defa" stroke="#5aa2dc" stroke-width="1.4" stroke-linejoin="round"/></svg>
<div class="b" style="left:1577.00px;top:608.80px;width:16.80px;height:17.00px;background:#fff;border:1.6px solid #747474;border-radius:3px;box-sizing:border-box;"></div>
<div class="b" style="left:3.00px;top:636.00px;width:81.00px;height:32.60px;background:#e6e6e6;"></div>
<div class="b" style="left:87.00px;top:636.00px;width:43.50px;height:32.60px;background:#e6e6e6;"></div>
<div class="b" style="left:133.50px;top:636.00px;width:43.20px;height:32.60px;background:#e6e6e6;"></div>
<div class="b" style="left:179.70px;top:636.00px;width:24.00px;height:32.60px;background:#e6e6e6;"></div>
<div class="b" style="left:206.60px;top:636.00px;width:222.60px;height:32.60px;background:#e6e6e6;"></div>
<div class="b" style="left:432.00px;top:636.00px;width:520.50px;height:32.60px;background:#e6e6e6;"></div>
<div class="b" style="left:955.50px;top:636.00px;width:94.50px;height:32.60px;background:#e6e6e6;"></div>
<div class="b" style="left:1053.00px;top:636.00px;width:94.20px;height:32.60px;background:#e6e6e6;"></div>
<div class="b" style="left:1150.00px;top:636.00px;width:94.50px;height:32.60px;background:#e6e6e6;"></div>
<div class="b" style="left:1247.50px;top:636.00px;width:94.50px;height:32.60px;background:#e6e6e6;"></div>
<div class="b" style="left:1345.00px;top:636.00px;width:28.00px;height:32.60px;background:#e6e6e6;"></div>
<div class="b" style="left:1376.00px;top:636.00px;width:27.50px;height:32.60px;background:#e6e6e6;"></div>
<div class="b" style="left:1406.50px;top:636.00px;width:27.80px;height:32.60px;background:#e6e6e6;"></div>
<div class="b" style="left:1437.30px;top:636.00px;width:27.70px;height:32.60px;background:#e6e6e6;"></div>
<div class="b" style="left:1468.00px;top:636.00px;width:28.00px;height:32.60px;background:#e6e6e6;"></div>
<div class="b" style="left:1499.00px;top:636.00px;width:30.50px;height:32.60px;background:#e6e6e6;"></div>
<div class="b" style="left:1532.20px;top:636.00px;width:34.30px;height:32.60px;background:#e6e6e6;"></div>
<div class="b" style="left:1569.30px;top:636.00px;width:70.70px;height:32.60px;background:#e6e6e6;"></div>
<div class="t v" style="top:646.66px;font-size:13.4px;line-height:13.4px;color:rgba(45,45,45,0.58);font-weight:normal;letter-spacing:0.293px;left:5.90px;transform:scaleX(1.0527);transform-origin:0 50%;">2107-9</div>
<div class="t v" style="top:646.66px;font-size:13.4px;line-height:13.4px;color:rgba(45,45,45,0.58);font-weight:normal;letter-spacing:0.169px;left:90.10px;transform:scaleX(1.0289);transform-origin:0 50%;">Dejan</div>
<svg class="b" style="left:135.80px;top:638.00px;" width="25.7" height="26" viewBox="0 0 25.7 26"><defs><linearGradient id="rg" x1="0" y1="0" x2="0" y2="1"><stop offset="0" stop-color="#f3e6c4"/><stop offset="1" stop-color="#b89668"/></linearGradient><linearGradient id="ag" x1="0" y1="0" x2="0" y2="1"><stop offset="0" stop-color="#3b7fc0"/><stop offset="1" stop-color="#13477e"/></linearGradient></defs><rect x="0" y="0" width="25.7" height="26" fill="#fff"/><path d="M3.2 7.8 L9.2 4 V6.6 H11.6 V9 H9.2 V11.6 Z" fill="url(#ag)"/><path d="M22.5 7.8 L16.5 4 V6.6 H14.1 V9 H16.5 V11.6 Z" fill="url(#ag)"/><rect x="2.9" y="14.2" width="20.3" height="8.6" rx="0.8" fill="url(#rg)"/><rect x="3.90" y="16.2" width="1.1" height="6" fill="#6e5432"/><rect x="6.35" y="17.2" width="1.1" height="5" fill="#6e5432"/><rect x="8.80" y="16.2" width="1.1" height="6" fill="#6e5432"/><rect x="11.25" y="17.2" width="1.1" height="5" fill="#6e5432"/><rect x="13.70" y="16.2" width="1.1" height="6" fill="#6e5432"/><rect x="16.15" y="17.2" width="1.1" height="5" fill="#6e5432"/><rect x="18.60" y="16.2" width="1.1" height="6" fill="#6e5432"/><rect x="21.05" y="17.2" width="1.1" height="5" fill="#6e5432"/></svg>
<div class="b" style="left:181.70px;top:646.00px;width:12.00px;height:11.50px;background:#fff;"></div>
<svg class="b" style="left:181.70px;top:646.00px;" width="12" height="11.5" viewBox="0 0 12 11.5"><path d="M3.5 2.5 L9.5 5.8 L3.5 9.1 Z" fill="#777"/></svg>
<div class="t v" style="top:646.66px;font-size:13.4px;line-height:13.4px;color:rgba(30,30,205,0.88);font-weight:normal;letter-spacing:-0.016px;left:209.50px;transform:scaleX(0.9972);transform-origin:0 50%;text-decoration:underline;">SANOLABOR D.D.</div>
<div class="t v" style="top:646.66px;font-size:13.4px;line-height:13.4px;color:#1c1cc8;font-weight:bold;letter-spacing:0.397px;left:435.00px;transform:scaleX(1.0842);transform-origin:0 50%;text-decoration:underline;">Oprema laboratorija</div>
<div class="t v" style="top:646.66px;font-size:13.4px;line-height:13.4px;color:rgba(45,45,45,0.58);font-weight:normal;letter-spacing:0.275px;right:552.32px;text-align:right;transform:scaleX(1.0553);transform-origin:100% 50%;">19.732,22</div>
<div class="t v" style="top:646.66px;font-size:13.4px;line-height:13.4px;color:rgba(45,45,45,0.58);font-weight:normal;letter-spacing:0.33px;right:455.07px;text-align:right;transform:scaleX(1.0570);transform-origin:100% 50%;">0,00</div>
<div class="t v" style="top:646.66px;font-size:13.4px;line-height:13.4px;color:rgba(45,45,45,0.58);font-weight:normal;letter-spacing:0.33px;right:357.77px;text-align:right;transform:scaleX(1.0570);transform-origin:100% 50%;">0,00</div>
<div class="t v" style="top:646.66px;font-size:13.4px;line-height:13.4px;color:rgba(45,45,45,0.58);font-weight:normal;letter-spacing:0.275px;right:260.32px;text-align:right;transform:scaleX(1.0553);transform-origin:100% 50%;">19.732,22</div>
<svg class="b" style="left:1408.50px;top:640.50px;" width="24" height="24" viewBox="0 0 24 24"><path d="M6 0.9 H16.6 Q19.2 0.9 19.2 3.5 V8.2" fill="none" stroke="#8088b4" stroke-width="1.8"/><path d="M6 0.9 L2.2 4.9 V18.8 Q2.2 21.5 4.8 21.5 H12.2" fill="none" stroke="#8088b4" stroke-width="1.8"/><path d="M6.2 0.9 L2.2 5 H6.2 Z" fill="#3f6fd0"/><path d="M16.2 7.9 V21.6 M9.4 14.7 H23.1" stroke="#6cc066" stroke-width="3"/></svg>
<svg class="b" style="left:1439.80px;top:641.00px;" width="22" height="22" viewBox="0 0 22 22"><defs><linearGradient id="eg" x1="0" y1="0" x2="1" y2="1"><stop offset="0" stop-color="#ffffff"/><stop offset="0.55" stop-color="#eef2ff"/><stop offset="1" stop-color="#a9cdf2"/></linearGradient></defs><rect x="2" y="2.4" width="15.8" height="18.2" rx="1.2" fill="url(#eg)" stroke="#8f96c6" stroke-width="1.7"/><path d="M6.2 17.8 L18.2 5.4" stroke="#6f70a8" stroke-width="5" stroke-linecap="round"/><path d="M6.2 17.8 L18.2 5.4" stroke="#a9a6dc" stroke-width="2.8" stroke-linecap="round"/><path d="M5.4 18.8 L8.4 15.6" stroke="#5a6040" stroke-width="3" stroke-linecap="round"/><circle cx="19.2" cy="4.4" r="2.3" fill="#c8461e"/><circle cx="18.4" cy="5.2" r="1.1" fill="#f0a040"/></svg>
<svg class="b" style="left:1503.00px;top:640.80px;" width="23" height="23" viewBox="0 0 23 23"><g transform="rotate(-12 11 11.5)"><rect x="2.6" y="3.6" width="16.8" height="16" rx="2.6" fill="#a9a9ac"/><rect x="4.2" y="4.6" width="14" height="12.2" rx="1.6" fill="#dcdcde"/></g><path d="M8.4 8.4 Q10.4 4.4 13.8 7.2" fill="none" stroke="#262626" stroke-width="2.1" stroke-linecap="round"/><path d="M5 12 L8.6 12.8 L9.4 15.8 L5.4 15.2 Z" fill="#363636"/><path d="M6.2 11.2 L17 13.6" stroke="#ffffff" stroke-width="1.8"/><path d="M3.6 18.6 L11.6 20.8 L20 17.6" fill="none" stroke="#a8a8aa" stroke-width="1.1"/></svg>
<svg class="b" style="left:1540.50px;top:641.50px;" width="25" height="24" viewBox="0 0 25 24"><path d="M6 0.8 H13.7 Q15.2 0.8 15.2 2.3 V16.2 Q15.2 17.7 13.7 17.7 H2.3 Q0.8 17.7 0.8 16.2 V6 Z" fill="#dcedfb" stroke="#5aa2dc" stroke-width="1.6" stroke-linejoin="round"/><path d="M6 0.8 V6 H0.8" fill="#b4defa" stroke="#5aa2dc" stroke-width="1.4" stroke-linejoin="round"/><path d="M14.5 5.6 H21.8 Q23.3 5.6 23.3 7.1 V20.9 Q23.3 22.4 21.8 22.4 H10.6 Q9.1 22.4 9.1 20.9 V11 Z" fill="#dcedfb" stroke="#5aa2dc" stroke-width="1.6" stroke-linejoin="round"/><path d="M14.5 5.6 V11 H9.1" fill="#b4defa" stroke="#5aa2dc" stroke-width="1.4" stroke-linejoin="round"/></svg>
<div class="b" style="left:1577.00px;top:644.70px;width:16.80px;height:17.00px;background:#fff;border:1.6px solid #747474;border-radius:3px;box-sizing:border-box;"></div>
<div class="b" style="left:3.00px;top:671.90px;width:81.00px;height:28.10px;background:#e6e6e6;"></div>
<div class="b" style="left:87.00px;top:671.90px;width:43.50px;height:28.10px;background:#e6e6e6;"></div>
<div class="b" style="left:133.50px;top:671.90px;width:43.20px;height:28.10px;background:#e6e6e6;"></div>
<div class="b" style="left:179.70px;top:671.90px;width:24.00px;height:28.10px;background:#e6e6e6;"></div>
<div class="b" style="left:206.60px;top:671.90px;width:222.60px;height:28.10px;background:#e6e6e6;"></div>
<div class="b" style="left:432.00px;top:671.90px;width:520.50px;height:28.10px;background:#e6e6e6;"></div>
<div class="b" style="left:955.50px;top:671.90px;width:94.50px;height:28.10px;background:#e6e6e6;"></div>
<div class="b" style="left:1053.00px;top:671.90px;width:94.20px;height:28.10px;background:#e6e6e6;"></div>
<div class="b" style="left:1150.00px;top:671.90px;width:94.50px;height:28.10px;background:#e6e6e6;"></div>
<div class="b" style="left:1247.50px;top:671.90px;width:94.50px;height:28.10px;background:#e6e6e6;"></div>
<div class="b" style="left:1345.00px;top:671.90px;width:28.00px;height:28.10px;background:#e6e6e6;"></div>
<div class="b" style="left:1376.00px;top:671.90px;width:27.50px;height:28.10px;background:#e6e6e6;"></div>
<div class="b" style="left:1406.50px;top:671.90px;width:27.80px;height:28.10px;background:#e6e6e6;"></div>
<div class="b" style="left:1437.30px;top:671.90px;width:27.70px;height:28.10px;background:#e6e6e6;"></div>
<div class="b" style="left:1468.00px;top:671.90px;width:28.00px;height:28.10px;background:#e6e6e6;"></div>
<div class="b" style="left:1499.00px;top:671.90px;width:30.50px;height:28.10px;background:#e6e6e6;"></div>
<div class="b" style="left:1532.20px;top:671.90px;width:34.30px;height:28.10px;background:#e6e6e6;"></div>
<div class="b" style="left:1569.30px;top:671.90px;width:70.70px;height:28.10px;background:#e6e6e6;"></div>
<svg class="b" style="left:136.00px;top:675.60px;" width="24" height="24" viewBox="0 0 24 24"><path d="M12 0.8 L23.2 12 L12 23.2 L0.8 12 Z" fill="#f5c72c" stroke="#4d3b12" stroke-width="1.5" stroke-linejoin="round"/><circle cx="12.3" cy="5.9" r="2.3" fill="#111"/><path d="M11.2 8.2 L7.6 9.4 L5.4 12.2 L6.4 13.6 L8.4 12.6 L9.2 14.4 L8.6 17.4 L11.2 17.8 L12 15.2 L13.8 12.8 L13.6 9.6 Z" fill="#111"/><path d="M10.6 11.6 L15.2 13 L18.2 14.6" fill="none" stroke="#111" stroke-width="1.8" stroke-linecap="round"/><ellipse cx="18.4" cy="14.8" rx="2" ry="1.4" fill="#1a1a1a"/></svg>
<div class="b" style="left:160.4px;top:240.4px;width:330px;height:46.8px;background:#fff;border:1px solid #8a8a8a;box-sizing:border-box;box-shadow:1px 1px 2px rgba(0,0,0,0.25);"></div>
<div class="t " style="top:246.70px;font-size:15px;line-height:15px;color:#737373;font-weight:normal;letter-spacing:0.457px;left:165.60px;transform:scaleX(1.1017);transform-origin:0 50%;">Stranka je sprejela predlog. Janez je</div>
<div class="t " style="top:266.50px;font-size:15px;line-height:15px;color:#737373;font-weight:normal;letter-spacing:0.521px;left:165.60px;transform:scaleX(1.1124);transform-origin:0 50%;">prejel dokumentacijo 3.9.</div>
</body></html>
